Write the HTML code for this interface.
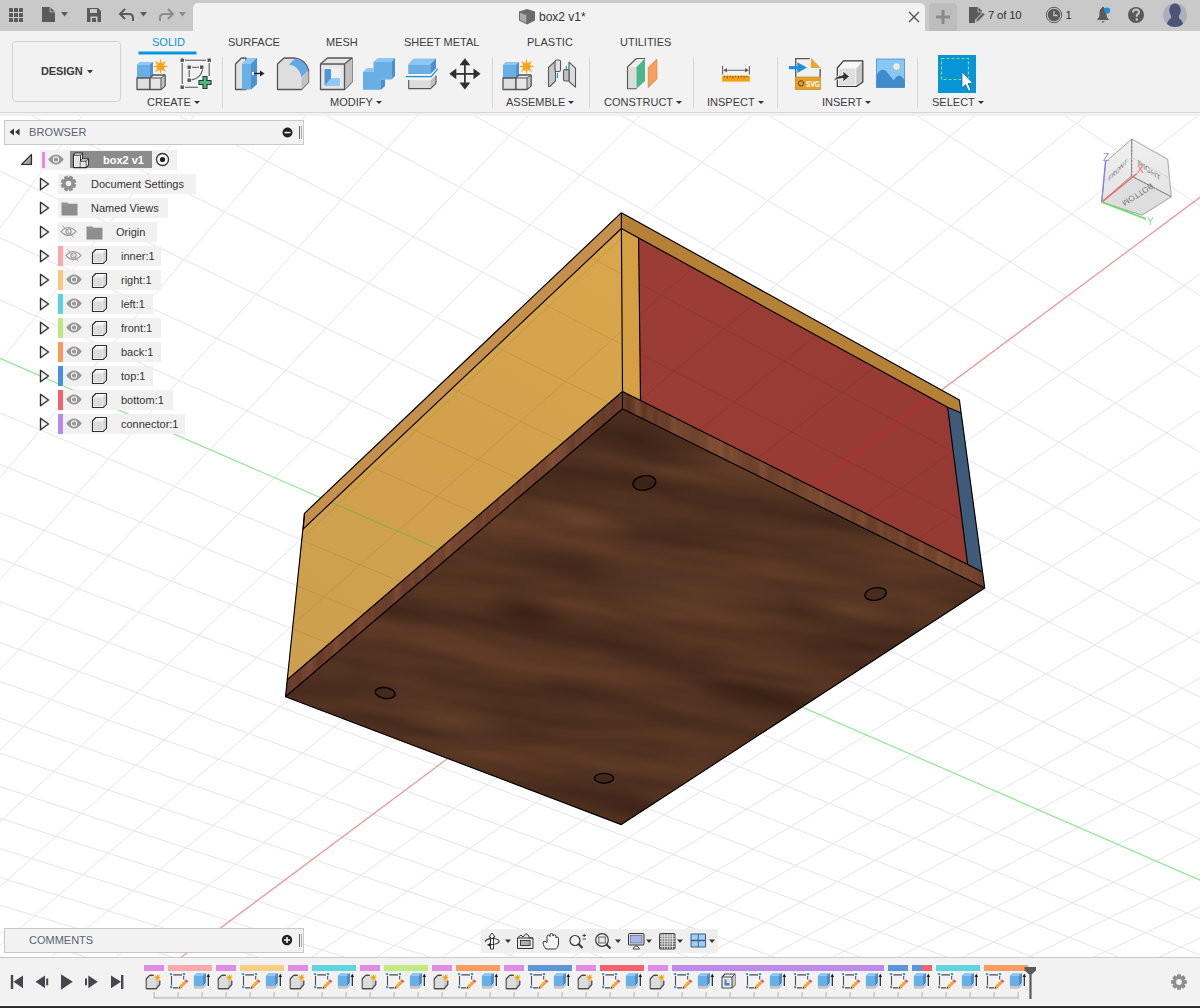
<!DOCTYPE html>
<html><head><meta charset="utf-8">
<style>
*{box-sizing:border-box;margin:0;padding:0}
html,body{width:1200px;height:1008px;overflow:hidden;background:#fff;font-family:"Liberation Sans",sans-serif;color:#3c3c3c}
.abs{position:absolute}
#topbar{position:absolute;left:0;top:0;width:1200px;height:31px;background:#c9c9c9}
#tab{position:absolute;left:193px;top:3px;width:732px;height:29px;background:#f2f2f2;border-radius:5px 5px 0 0}
#toolbar{position:absolute;left:0;top:31px;width:1200px;height:82px;background:#f2f2f2;border-bottom:1px solid #d6d6d6}
.tabt{position:absolute;top:35px;font-size:12px;color:#3c3c3c;white-space:nowrap;letter-spacing:0}
.lbl{position:absolute;top:95px;font-size:11.5px;color:#3c3c3c;white-space:nowrap}
.lbl i{display:inline-block;width:0;height:0;border-left:3px solid transparent;border-right:3px solid transparent;border-top:4px solid #3c3c3c;margin-left:3px;vertical-align:2px}
.sep{position:absolute;top:57px;width:1px;height:50px;background:#d4d4d4}
#viewport{position:absolute;left:0;top:113px;width:1200px;height:845px;overflow:hidden;background:#fff}
.panel{position:absolute;background:#f2f2f2;border:1px solid #c8c8c8}
.row{position:absolute;height:20px;background:rgba(240,240,240,0.95);font-size:12px;color:#3c3c3c;line-height:20px;white-space:nowrap}
.tri{position:absolute;width:11px;height:13px}
#timeline{position:absolute;left:0;top:957px;width:1200px;height:51px;background:#f2f2f2;border-top:1px solid #cacaca}
</style></head><body>
<div id="viewport">
<svg width="1200" height="845" viewBox="0 113 1200 845" style="position:absolute;left:0;top:0">
<path d="M-803.3 834.5L179.4 -1315.5M-740.2 851.3L310.6 -1199.9M-678.7 867.7L433.2 -1091.8M-618.7 883.7L548.2 -990.5M-560.2 899.3L656.2 -895.3M-503.1 914.5L757.8 -805.8M-447.4 929.3L853.6 -721.3M-393.1 943.8L944.1 -641.6M-340.0 958.0L1029.6 -566.2M-288.2 971.8L1110.7 -494.8M-237.5 985.3L1187.6 -427.0M-188.0 998.5L1260.6 -362.7M-139.7 1011.3L1330.0 -301.5M-92.4 1023.9L1396.2 -243.2M-46.1 1036.3L1459.2 -187.6M-0.9 1048.3L1519.4 -134.5M86.7 1071.7L1631.9 -35.4M129.1 1083.0L1684.6 11.0M170.6 1094.0L1735.0 55.5M211.3 1104.8L1783.4 98.1M251.1 1115.5L1829.9 139.1M290.1 1125.9L1874.5 178.4M328.3 1136.0L1917.4 216.2M365.8 1146.0L1958.7 252.6M402.5 1155.8L1998.5 287.6M438.6 1165.4L2036.8 321.4M473.9 1174.8L2073.7 354.0M508.5 1184.1L2109.3 385.4M542.5 1193.1L2143.8 415.7M575.9 1202.0L2177.0 445.0M608.6 1210.7L2209.1 473.3M640.8 1219.3L2240.2 500.7M672.3 1227.7L2270.3 527.2M703.3 1236.0L2299.4 552.9M733.7 1244.1L2327.6 577.7M-803.3 834.5L763.6 1252.0M-792.9 811.6L789.4 1241.5M-782.0 787.9L815.8 1230.7M-770.8 763.3L842.8 1219.7M-759.1 737.8L870.5 1208.4M-747.0 711.3L898.9 1196.8M-734.4 683.8L928.0 1184.9M-721.4 655.2L957.9 1172.7M-707.8 625.5L988.5 1160.1M-693.6 594.5L1019.9 1147.3M-678.9 562.3L1052.2 1134.1M-663.5 528.7L1085.4 1120.6M-647.5 493.6L1119.4 1106.6M-630.7 456.9L1154.5 1092.3M-613.2 418.6L1190.5 1077.6M-594.9 378.4L1227.5 1062.5M-575.6 336.4L1265.6 1046.9M-555.5 292.3L1304.8 1030.9M-534.3 245.9L1345.2 1014.4M-512.0 197.2L1386.8 997.4M-463.9 91.8L1474.0 961.8M-437.8 34.7L1519.6 943.1M-410.1 -25.7L1566.8 923.9M-380.9 -89.6L1615.5 904.0M-349.9 -157.5L1665.8 883.4M-316.9 -229.7L1717.8 862.2M-281.8 -306.5L1771.6 840.2M-244.3 -388.5L1827.3 817.4M-204.2 -476.2L1885.0 793.8M-161.3 -570.2L1944.8 769.4M-115.1 -671.2L2006.8 744.1M-65.3 -780.1L2071.2 717.8M-11.5 -897.7L2138.0 690.5M46.8 -1025.3L2207.5 662.1M110.2 -1164.0L2279.7 632.5" stroke="#e5e5e5" stroke-width="1" fill="none"/><path d="M-488.6 145.9L1429.7 979.9" stroke="#86e886" stroke-width="1.1" fill="none"/><path d="M43.4 1060.1L1576.9 -83.9" stroke="#f28a8a" stroke-width="1.1" fill="none"/>
<defs>
<linearGradient id="gyel" gradientUnits="userSpaceOnUse" x1="621" y1="230" x2="300" y2="680"><stop offset="0" stop-color="#d9a74c"/><stop offset="0.45" stop-color="#d2a14c"/><stop offset="1" stop-color="#cda04f"/></linearGradient>
<linearGradient id="gred" gradientUnits="userSpaceOnUse" x1="640" y1="240" x2="960" y2="560"><stop offset="0" stop-color="#9b3d35"/><stop offset="1" stop-color="#953a33"/></linearGradient>
<linearGradient id="gwood" gradientUnits="userSpaceOnUse" x1="-54.9" y1="274.7" x2="-135.2" y2="676.9"><stop offset="0.0" stop-color="#563323"/><stop offset="0.029" stop-color="#40261a"/><stop offset="0.059" stop-color="#593624"/><stop offset="0.088" stop-color="#3f2619"/><stop offset="0.118" stop-color="#583524"/><stop offset="0.147" stop-color="#42281b"/><stop offset="0.176" stop-color="#533222"/><stop offset="0.206" stop-color="#43281b"/><stop offset="0.235" stop-color="#533222"/><stop offset="0.265" stop-color="#43281b"/><stop offset="0.294" stop-color="#533222"/><stop offset="0.324" stop-color="#3f261a"/><stop offset="0.353" stop-color="#573423"/><stop offset="0.382" stop-color="#472b1d"/><stop offset="0.412" stop-color="#543222"/><stop offset="0.441" stop-color="#40271a"/><stop offset="0.471" stop-color="#593524"/><stop offset="0.5" stop-color="#482b1d"/><stop offset="0.529" stop-color="#583524"/><stop offset="0.559" stop-color="#42281b"/><stop offset="0.588" stop-color="#5d3826"/><stop offset="0.618" stop-color="#3e2519"/><stop offset="0.647" stop-color="#5c3725"/><stop offset="0.676" stop-color="#41271a"/><stop offset="0.706" stop-color="#543222"/><stop offset="0.735" stop-color="#3f261a"/><stop offset="0.765" stop-color="#563323"/><stop offset="0.794" stop-color="#472a1d"/><stop offset="0.824" stop-color="#543322"/><stop offset="0.853" stop-color="#44291c"/><stop offset="0.882" stop-color="#593624"/><stop offset="0.912" stop-color="#42281b"/><stop offset="0.941" stop-color="#583524"/><stop offset="0.971" stop-color="#3f2619"/><stop offset="1.0" stop-color="#533222"/></linearGradient>
<radialGradient id="rdark" cx="0.5" cy="0.5" r="0.5"><stop offset="0" stop-color="#2a170e" stop-opacity="0.55"/><stop offset="1" stop-color="#2a170e" stop-opacity="0"/></radialGradient>
<radialGradient id="rlight" cx="0.5" cy="0.5" r="0.5"><stop offset="0" stop-color="#7a5236" stop-opacity="0.45"/><stop offset="1" stop-color="#7a5236" stop-opacity="0"/></radialGradient>
<clipPath id="cbot"><polygon points="622.5,408.8 285.5,696.7 621.3,824.6 984.7,587.9"/></clipPath>
<linearGradient id="gstripL" gradientUnits="userSpaceOnUse" x1="290" y1="690" x2="620" y2="400"><stop offset="0" stop-color="#5e3526"/><stop offset="0.15" stop-color="#744430"/><stop offset="0.3" stop-color="#6a3d2b"/><stop offset="0.45" stop-color="#7a4a33"/><stop offset="0.6" stop-color="#6d3f2c"/><stop offset="0.8" stop-color="#7a4833"/><stop offset="1" stop-color="#5a3325"/></linearGradient>
<linearGradient id="gstripR" gradientUnits="userSpaceOnUse" x1="622" y1="400" x2="984" y2="580"><stop offset="0" stop-color="#5a3424"/><stop offset="0.12" stop-color="#6c412c"/><stop offset="0.25" stop-color="#7b4c33"/><stop offset="0.4" stop-color="#6a3f2b"/><stop offset="0.55" stop-color="#80513a"/><stop offset="0.7" stop-color="#6c412d"/><stop offset="0.85" stop-color="#7a4a34"/><stop offset="1" stop-color="#6a3e2b"/></linearGradient>
</defs>
<polygon points="621.4,212.7 304.5,513.3 285.5,696.7 621.3,824.6 984.7,587.9 959.4,400" fill="#5a3424"/>
<polygon points="621.4,212.7 304.5,513.3 303.3,528.8 621.4,228.5" fill="#c4904c"/>
<polygon points="621.4,228.5 303.3,528.8 287,680 622.5,391.5" fill="url(#gyel)"/>
<polygon points="621.4,212.7 959.4,400 960.7,412.8 947.6,407.3 621.4,228.5" fill="#b58136"/>
<polygon points="621.4,228.5 638.6,238.5 640.5,400.5 622.5,391.5" fill="#d4a043"/>
<polygon points="638.6,238.5 947.6,407.3 967.7,564.6 640.5,400.5" fill="url(#gred)"/>
<polygon points="947.6,407.3 960.7,412.8 982.5,572 967.7,563.4" fill="#3f5b7a"/>
<polygon points="622.5,391.5 287,680 285.5,696.7 622.5,408.8" fill="url(#gstripL)"/>
<polygon points="622.5,391.5 982.5,572 984.7,587.9 622.5,408.8" fill="url(#gstripR)"/>
<filter id="fstrip" x="0" y="0" width="1" height="1" color-interpolation-filters="sRGB"><feTurbulence type="fractalNoise" baseFrequency="0.12 0.008" numOctaves="2" seed="5"/><feColorMatrix type="matrix" values="0.3 0 0 0 0.3  0.2 0 0 0 0.165  0.14 0 0 0 0.105  0 0 0 0 0.55"/></filter>
<clipPath id="cstrips"><polygon points="622.5,391.5 287,680 285.5,696.7 622.5,408.8"/><polygon points="622.5,391.5 982.5,572 984.7,587.9 622.5,408.8"/></clipPath>
<g clip-path="url(#cstrips)"><rect x="280" y="385" width="710" height="320" filter="url(#fstrip)"/></g>
<filter id="fwood" x="0" y="0" width="1" height="1" color-interpolation-filters="sRGB"><feTurbulence type="fractalNoise" baseFrequency="0.005 0.032" numOctaves="3" seed="11"/><feColorMatrix type="matrix" values="0.19 0 0 0 0.222  0.125 0 0 0 0.13  0.08 0 0 0 0.088  0 0 0 0 1"/></filter>
<g clip-path="url(#cbot)"><rect x="200" y="250" width="900" height="700" filter="url(#fwood)" transform="rotate(9 620 600)"/></g>
<g clip-path="url(#cbot)">
<ellipse cx="526" cy="612" rx="45" ry="22" transform="rotate(12 526 612)" fill="url(#rdark)"/>
<ellipse cx="640" cy="440" rx="90" ry="25" transform="rotate(12 640 440)" fill="url(#rdark)"/>
<ellipse cx="770" cy="700" rx="80" ry="18" transform="rotate(12 770 700)" fill="url(#rdark)"/>
<ellipse cx="690" cy="590" rx="110" ry="35" transform="rotate(12 690 590)" fill="url(#rlight)"/>
<ellipse cx="455" cy="720" rx="70" ry="20" transform="rotate(12 455 720)" fill="url(#rlight)"/>
<ellipse cx="580" cy="520" rx="60" ry="16" transform="rotate(12 580 520)" fill="url(#rlight)"/>
<ellipse cx="850" cy="610" rx="60" ry="18" transform="rotate(12 850 610)" fill="url(#rlight)"/>
</g>
<clipPath id="cwall"><polygon points="621.4,228.5 303.3,528.8 287,680 622.5,391.5"/><polygon points="638.6,238.5 947.6,407.3 967.7,564.6 640.5,400.5"/></clipPath>
<path clip-path="url(#cwall)" d="M-803.3 834.5L179.4 -1315.5M-740.2 851.3L310.6 -1199.9M-678.7 867.7L433.2 -1091.8M-618.7 883.7L548.2 -990.5M-560.2 899.3L656.2 -895.3M-503.1 914.5L757.8 -805.8M-447.4 929.3L853.6 -721.3M-393.1 943.8L944.1 -641.6M-340.0 958.0L1029.6 -566.2M-288.2 971.8L1110.7 -494.8M-237.5 985.3L1187.6 -427.0M-188.0 998.5L1260.6 -362.7M-139.7 1011.3L1330.0 -301.5M-92.4 1023.9L1396.2 -243.2M-46.1 1036.3L1459.2 -187.6M-0.9 1048.3L1519.4 -134.5M43.4 1060.1L1576.9 -83.9M86.7 1071.7L1631.9 -35.4M129.1 1083.0L1684.6 11.0M170.6 1094.0L1735.0 55.5M211.3 1104.8L1783.4 98.1M251.1 1115.5L1829.9 139.1M290.1 1125.9L1874.5 178.4M328.3 1136.0L1917.4 216.2M365.8 1146.0L1958.7 252.6M402.5 1155.8L1998.5 287.6M438.6 1165.4L2036.8 321.4M473.9 1174.8L2073.7 354.0M508.5 1184.1L2109.3 385.4M542.5 1193.1L2143.8 415.7M575.9 1202.0L2177.0 445.0M608.6 1210.7L2209.1 473.3M640.8 1219.3L2240.2 500.7M672.3 1227.7L2270.3 527.2M703.3 1236.0L2299.4 552.9M733.7 1244.1L2327.6 577.7M-803.3 834.5L763.6 1252.0M-792.9 811.6L789.4 1241.5M-782.0 787.9L815.8 1230.7M-770.8 763.3L842.8 1219.7M-759.1 737.8L870.5 1208.4M-747.0 711.3L898.9 1196.8M-734.4 683.8L928.0 1184.9M-721.4 655.2L957.9 1172.7M-707.8 625.5L988.5 1160.1M-693.6 594.5L1019.9 1147.3M-678.9 562.3L1052.2 1134.1M-663.5 528.7L1085.4 1120.6M-647.5 493.6L1119.4 1106.6M-630.7 456.9L1154.5 1092.3M-613.2 418.6L1190.5 1077.6M-594.9 378.4L1227.5 1062.5M-575.6 336.4L1265.6 1046.9M-555.5 292.3L1304.8 1030.9M-534.3 245.9L1345.2 1014.4M-512.0 197.2L1386.8 997.4M-488.6 145.9L1429.7 979.9M-463.9 91.8L1474.0 961.8M-437.8 34.7L1519.6 943.1M-410.1 -25.7L1566.8 923.9M-380.9 -89.6L1615.5 904.0M-349.9 -157.5L1665.8 883.4M-316.9 -229.7L1717.8 862.2M-281.8 -306.5L1771.6 840.2M-244.3 -388.5L1827.3 817.4M-204.2 -476.2L1885.0 793.8M-161.3 -570.2L1944.8 769.4M-115.1 -671.2L2006.8 744.1M-65.3 -780.1L2071.2 717.8M-11.5 -897.7L2138.0 690.5M46.8 -1025.3L2207.5 662.1M110.2 -1164.0L2279.7 632.5" stroke="#000" stroke-opacity="0.075" stroke-width="1" fill="none"/>
<path clip-path="url(#cwall)" d="M-488.6 145.9L1429.7 979.9" stroke="#30e030" stroke-opacity="0.35" stroke-width="1.1" fill="none"/>
<path clip-path="url(#cwall)" d="M43.4 1060.1L1576.9 -83.9" stroke="#ff2020" stroke-opacity="0.45" stroke-width="1.1" fill="none"/>
<polyline points="621.4,212.7 304.5,513.3 285.5,696.7 621.3,824.6 984.7,587.9 959.4,400 621.4,212.7" fill="none" stroke="#000" stroke-width="1.15" stroke-linejoin="round"/>
<polyline points="304.5,513.3 303.3,528.8 621.4,228.5 947.6,407.3 960.7,412.8" fill="none" stroke="#000" stroke-width="1.15" stroke-linejoin="round"/>
<polyline points="621.4,212.7 621.4,228.5 622.5,391.5 622.5,408.8" fill="none" stroke="#000" stroke-width="1.15" stroke-linejoin="round"/>
<polyline points="638.6,238.5 640.5,400.5" fill="none" stroke="#000" stroke-width="1.15" stroke-linejoin="round"/>
<polyline points="287,680 622.5,391.5 982.5,572" fill="none" stroke="#000" stroke-width="1.15" stroke-linejoin="round"/>
<polyline points="285.5,696.7 622.5,408.8 984.7,587.9" fill="none" stroke="#000" stroke-width="1.15" stroke-linejoin="round"/>
<polyline points="947.6,407.3 967.7,564.6" fill="none" stroke="#000" stroke-width="1.15" stroke-linejoin="round"/>
<defs><radialGradient id="rhole" cx="0.5" cy="0.4" r="0.6"><stop offset="0" stop-color="#6a442e"/><stop offset="1" stop-color="#3a2118"/></radialGradient></defs>
<ellipse cx="644.4" cy="482.9" rx="11.5" ry="7.1" transform="rotate(-10 644.4 482.9)" fill="#2e1a10" fill-opacity="0.35" stroke="#000" stroke-width="1.35"/>
<ellipse cx="875.6" cy="594" rx="10.8" ry="6.2" transform="rotate(-10 875.6 594)" fill="#2e1a10" fill-opacity="0.35" stroke="#000" stroke-width="1.35"/>
<ellipse cx="385.2" cy="693" rx="10" ry="5.4" transform="rotate(8 385.2 693)" fill="#2e1a10" fill-opacity="0.35" stroke="#000" stroke-width="1.35"/>
<ellipse cx="604" cy="778.2" rx="9.5" ry="4.9" transform="rotate(0 604 778.2)" fill="#2e1a10" fill-opacity="0.35" stroke="#000" stroke-width="1.35"/>
</svg>
</div>
<div id="topbar"></div>
<div id="tab"></div>
<div id="toolbar"></div>
<div class="abs" style="left:0;top:113px;width:1200px;height:3px;background:#f1f1f1"></div>
<div class="abs" style="left:12px;top:41px;width:109px;height:61px;border:1px solid #d3d3d3;border-radius:4px;background:#f2f2f2"></div>
<div class="abs" style="left:41px;top:64px;font-size:11px;font-weight:bold;color:#3a3a3a;line-height:14px;letter-spacing:-0.1px">DESIGN</div>
<div class="abs" style="left:152px;top:35px;font-size:11px;color:#0696d7;line-height:14px">SOLID</div>
<div class="abs" style="left:228px;top:35px;font-size:11px;color:#3c3c3c;line-height:14px">SURFACE</div>
<div class="abs" style="left:326px;top:35px;font-size:11px;color:#3c3c3c;line-height:14px">MESH</div>
<div class="abs" style="left:404px;top:35px;font-size:11px;color:#3c3c3c;line-height:14px">SHEET METAL</div>
<div class="abs" style="left:527px;top:35px;font-size:11px;color:#3c3c3c;line-height:14px">PLASTIC</div>
<div class="abs" style="left:620px;top:35px;font-size:11px;color:#3c3c3c;line-height:14px">UTILITIES</div>
<div class="abs" style="left:147px;top:95px;font-size:11px;color:#3c3c3c;line-height:14px">CREATE<span style="display:inline-block;width:0;height:0;border-left:3px solid transparent;border-right:3px solid transparent;border-top:3.5px solid #333;margin-left:3px;vertical-align:2px"></span></div>
<div class="abs" style="left:330px;top:95px;font-size:11px;color:#3c3c3c;line-height:14px">MODIFY<span style="display:inline-block;width:0;height:0;border-left:3px solid transparent;border-right:3px solid transparent;border-top:3.5px solid #333;margin-left:3px;vertical-align:2px"></span></div>
<div class="abs" style="left:506px;top:95px;font-size:11px;color:#3c3c3c;line-height:14px">ASSEMBLE<span style="display:inline-block;width:0;height:0;border-left:3px solid transparent;border-right:3px solid transparent;border-top:3.5px solid #333;margin-left:3px;vertical-align:2px"></span></div>
<div class="abs" style="left:604px;top:95px;font-size:11px;color:#3c3c3c;line-height:14px">CONSTRUCT<span style="display:inline-block;width:0;height:0;border-left:3px solid transparent;border-right:3px solid transparent;border-top:3.5px solid #333;margin-left:3px;vertical-align:2px"></span></div>
<div class="abs" style="left:707px;top:95px;font-size:11px;color:#3c3c3c;line-height:14px">INSPECT<span style="display:inline-block;width:0;height:0;border-left:3px solid transparent;border-right:3px solid transparent;border-top:3.5px solid #333;margin-left:3px;vertical-align:2px"></span></div>
<div class="abs" style="left:822px;top:95px;font-size:11px;color:#3c3c3c;line-height:14px">INSERT<span style="display:inline-block;width:0;height:0;border-left:3px solid transparent;border-right:3px solid transparent;border-top:3.5px solid #333;margin-left:3px;vertical-align:2px"></span></div>
<div class="abs" style="left:932px;top:95px;font-size:11px;color:#3c3c3c;line-height:14px">SELECT<span style="display:inline-block;width:0;height:0;border-left:3px solid transparent;border-right:3px solid transparent;border-top:3.5px solid #333;margin-left:3px;vertical-align:2px"></span></div>
<svg class="abs" style="left:0;top:0" width="1200" height="113" viewBox="0 0 1200 113"><g fill="#5a5a5a"><rect x="9" y="8" width="4" height="4" rx="0.6"/><rect x="14" y="8" width="4" height="4" rx="0.6"/><rect x="19" y="8" width="4" height="4" rx="0.6"/><rect x="9" y="13" width="4" height="4" rx="0.6"/><rect x="14" y="13" width="4" height="4" rx="0.6"/><rect x="19" y="13" width="4" height="4" rx="0.6"/><rect x="9" y="18" width="4" height="4" rx="0.6"/><rect x="14" y="18" width="4" height="4" rx="0.6"/><rect x="19" y="18" width="4" height="4" rx="0.6"/></g><path d="M42 7 H50 L55 12 V22 H42Z" fill="#5a5a5a"/><path d="M50 7 V12 H55" fill="#c9c9c9" stroke="#c9c9c9" stroke-width="0.6"/><path d="M50.5 7.5 L54.5 11.5 H50.5Z" fill="#5a5a5a"/><path d="M61 12 H68 L64.5 16.5Z" fill="#5a5a5a"/><path d="M87 8 H98 L101 11 V22 H87Z" fill="#5a5a5a"/><rect x="90" y="9" width="7" height="4" fill="#c9c9c9"/><path d="M90.5 22 V16.5 H97.5 V22 H96 V18 H92 V22Z" fill="#c9c9c9"/><path d="M121 14 H129 Q133 14 133 18 V21" fill="none" stroke="#5a5a5a" stroke-width="2"/><path d="M125 9 L120 14 L125 19" fill="none" stroke="#5a5a5a" stroke-width="2"/><path d="M140 12 H147 L143.5 16.5Z" fill="#5a5a5a"/><path d="M172 14 H164 Q160 14 160 18 V21" fill="none" stroke="#8c8c8c" stroke-width="2"/><path d="M168 9 L173 14 L168 19" fill="none" stroke="#8c8c8c" stroke-width="2"/><path d="M179 12 H186 L182.5 16.5Z" fill="#8c8c8c"/><path d="M519 11.5 L527 9 L535 11.5 L535 20.5 L527 24.5 L519 20.5Z" fill="#6a6a6a"/><path d="M520 12.8 L526.3 15 V23 L520 20Z" fill="#ababab"/><path d="M909 12 L919 22 M919 12 L909 22" stroke="#555" stroke-width="1.4"/><path d="M929 31 V7 Q929 3 933 3 H953 Q957 3 957 7 V31Z" fill="#bdbdbd"/><path d="M943 10 V24 M936 17 H950" stroke="#8a8a8a" stroke-width="3"/><path d="M969 7 H978 L982 11 V13 L975 20 V23 H969Z" fill="#5a5a5a"/><path d="M978 7 V12 H983" fill="none" stroke="#c9c9c9" stroke-width="0.8"/><path d="M975.5 22.5 L976.5 19 L983 12.5 L985 14.5 L978.5 21Z" fill="#5a5a5a" stroke="#c9c9c9" stroke-width="0.9"/><circle cx="1054" cy="15" r="7.7" fill="none" stroke="#5a5a5a" stroke-width="1"/><circle cx="1054" cy="15" r="6.2" fill="#5a5a5a"/><path d="M1054 11 V15.5 H1057.5" fill="none" stroke="#c9c9c9" stroke-width="1.3"/><path d="M1096.5 20 Q1099.5 18 1099.5 14 V12.5 Q1099.5 8.5 1102 8 V7 H1104 V8 Q1106.5 8.5 1106.5 12.5 V14 Q1106.5 18 1109.5 20Z" fill="#5a5a5a"/><path d="M1101 21.2 H1105 L1103 22.8Z" fill="#5a5a5a"/><circle cx="1107.2" cy="10.5" r="3" fill="#1e90e0"/><circle cx="1136" cy="15" r="8" fill="#5a5a5a"/><path d="M1133 12.5 Q1133 9.5 1136 9.5 Q1139 9.5 1139 12.3 Q1139 14 1136.8 15 V16.8" fill="none" stroke="#c9c9c9" stroke-width="2"/><circle cx="1136.8" cy="19.5" r="1.2" fill="#c9c9c9"/><circle cx="1175" cy="15" r="12" fill="#aeaebe"/><clipPath id="avc"><circle cx="1175" cy="15" r="12"/></clipPath><g clip-path="url(#avc)" fill="#4e5478"><ellipse cx="1175" cy="10.5" rx="5.8" ry="7"/><rect x="1171" y="15" width="8" height="5"/><path d="M1166 28 Q1167 20 1171.5 18 H1178.5 Q1183 20 1184 28Z"/></g><path d="M87 70 H93 L90 73.5Z" fill="#3a3a3a"/><rect x="138.5" y="51.5" width="58" height="3" fill="#0696d7"/><rect x="222" y="57" width="1" height="51" fill="#d6d6d6"/><rect x="492" y="57" width="1" height="51" fill="#d6d6d6"/><rect x="589" y="57" width="1" height="51" fill="#d6d6d6"/><rect x="693" y="57" width="1" height="51" fill="#d6d6d6"/><rect x="777" y="57" width="1" height="51" fill="#d6d6d6"/><rect x="917" y="57" width="1" height="51" fill="#d6d6d6"/><path d="M137 65 L140 62 H153 V75 L150 78 H137Z" fill="#6aaee6"/><path d="M137 65 L140 62 H153 L150 65Z" fill="#8fc6f2"/><path d="M150 65 L153 62 V75 L150 78Z" fill="#4c93d2"/><path d="M137 78 H150 V89.5 H137Z" fill="#dedede" stroke="#555" stroke-width="1.3" stroke-linejoin="round"/><path d="M150 78 L153 75 H165 V86 L161 89.5 H150Z" fill="#e6e6e6" stroke="#555" stroke-width="1.3" stroke-linejoin="round"/><path d="M161 89.5 V78 L165 75 V86Z" fill="#c4c4c4" stroke="#555" stroke-width="1"/><path d="M150 78 H161" stroke="#555" stroke-width="1"/><polygon points="160.50,58.50 161.76,63.45 166.16,60.84 163.55,65.24 168.50,66.50 163.55,67.76 166.16,72.16 161.76,69.55 160.50,74.50 159.24,69.55 154.84,72.16 157.45,67.76 152.50,66.50 157.45,65.24 154.84,60.84 159.24,63.45" fill="#f5a511"/><path d="M503 65 L506 62 H519 V75 L516 78 H503Z" fill="#6aaee6"/><path d="M503 65 L506 62 H519 L516 65Z" fill="#8fc6f2"/><path d="M516 65 L519 62 V75 L516 78Z" fill="#4c93d2"/><path d="M503 78 H516 V89.5 H503Z" fill="#dedede" stroke="#555" stroke-width="1.3" stroke-linejoin="round"/><path d="M516 78 L519 75 H531 V86 L527 89.5 H516Z" fill="#e6e6e6" stroke="#555" stroke-width="1.3" stroke-linejoin="round"/><path d="M527 89.5 V78 L531 75 V86Z" fill="#c4c4c4" stroke="#555" stroke-width="1"/><path d="M516 78 H527" stroke="#555" stroke-width="1"/><polygon points="526.50,58.50 527.76,63.45 532.16,60.84 529.55,65.24 534.50,66.50 529.55,67.76 532.16,72.16 527.76,69.55 526.50,74.50 525.24,69.55 520.84,72.16 523.45,67.76 518.50,66.50 523.45,65.24 520.84,60.84 525.24,63.45" fill="#f5a511"/><g fill="#555"><rect x="180.5" y="58.5" width="3.4" height="3.4"/><rect x="207.5" y="58.5" width="3.4" height="3.4"/><rect x="180.5" y="85.5" width="3.4" height="3.4"/><rect x="187.5" y="65.5" width="3.4" height="3.4"/><rect x="200" y="65.5" width="3.4" height="3.4"/><rect x="187.5" y="78.5" width="3.4" height="3.4"/></g><path d="M185 60.2 H206 M182.2 63 V84 M185 87.2 H198 M209.2 63 V76 M192 67.2 H199 M189.2 70 V77" stroke="#555" stroke-width="1.1"/><path d="M191.5 80 Q201 78 202.5 69.5" fill="none" stroke="#555" stroke-width="1.1"/><path d="M203 76.5 H207 V80.5 H211 V84.5 H207 V88.5 H203 V84.5 H199 V80.5 H203Z" fill="#4fb97c" stroke="#1f3d2c" stroke-width="1.1" stroke-linejoin="miter"/><path d="M235.5 64 L241.5 58 H246 V89.5 H235.5Z" fill="#e2e2e2" stroke="#555" stroke-width="1.3" stroke-linejoin="round"/><path d="M242 64 L248 58 H257 V84 L251 89.6 H242Z" fill="#6aaee6"/><path d="M242 64 L248 58 H257 L251 64Z" fill="#8fc6f2"/><path d="M251 64 L257 58 V84 L251 89.6Z" fill="#4c93d2"/><path d="M254 73.5 H261" stroke="#222" stroke-width="1.4"/><path d="M260 70.5 L264.5 73.5 L260 76.5Z" fill="#222"/><rect x="252" y="72" width="2" height="3" fill="#f2f2f2"/><path d="M277.5 64 L284 58 H294 Q305 59 308.5 70 V82 L301.5 89.5 H277.5Z" fill="#dedede" stroke="#555" stroke-width="1.3" stroke-linejoin="round"/><path d="M301.5 89.5 V78 L308.5 71 V82Z" fill="#c2c2c2"/><path d="M289 64.5 L295 58.5 Q305.5 60 308 71 L301.5 77 Q299 66 289 64.5Z" fill="#64a8e2"/><path d="M320.5 64 L327.5 58 H352 V82 L344.5 89.5 H320.5Z" fill="#e6e6e6" stroke="#555" stroke-width="1.3" stroke-linejoin="round"/><path d="M344.5 64 L352 58 V82 L344.5 89.5Z" fill="#c2c2c2"/><path d="M320.5 64 H344.5 L352 58 M344.5 64 V89.5" fill="none" stroke="#555" stroke-width="1.3" stroke-linejoin="round"/><rect x="324" y="68" width="17" height="18" fill="#f0f0f0"/><path d="M324.5 69 H331 V78 H340 V85.5 H324.5Z" fill="#4e96d4"/><path d="M324.5 85.5 L331 78 H340 V85.5Z" fill="#8fc8f4"/><path d="M373.5 62 H391.4 V79.5 H381 V89.75 H363 V72 H373.5Z" fill="#6aaee6"/><path d="M373.5 62 L378 58 H395 L391.4 62Z M363 72 L367 68 H373.5 V72Z" fill="#8cc6f2"/><path d="M391.4 62 L395 58 V76 L391.4 79.5Z M381 79.5 H385 V86 L381 89.75Z" fill="#4a8fd0"/><path d="M408.2 64.3 H430.4 V74 H408.2Z" fill="#6aaee6"/><path d="M408.2 64.3 L413.5 58.5 H436 L430.4 64.3Z" fill="#8cc6f2"/><path d="M430.4 64.3 L436 58.5 V68.5 L430.4 74Z" fill="#4a8fd0"/><path d="M405.8 76.6 H431.2 L437.8 68.8" fill="none" stroke="#1e8fe0" stroke-width="1.3"/><path d="M408.7 80 V88.6 H430.6 L436 83.3 V75.5 L430.6 80.5Z" fill="#dcdcdc"/><path d="M430.6 80.5 L436 75.5 V83.3 L430.6 88.6Z" fill="#c0c0c0"/><path d="M408.7 80 V88.6 H430.6 L436 83.3 V75.5" fill="none" stroke="#555" stroke-width="1.1" stroke-linejoin="round"/><path d="M464.9 62 V86 M452 73.8 H478" stroke="#2e2e2e" stroke-width="1.7"/><path d="M464.9 58.2 L470.3 65.2 H459.5Z M464.9 89.4 L470.3 82.4 H459.5Z M449.3 73.8 L456.3 68.4 V79.2Z M480.5 73.8 L473.5 68.4 V79.2Z" fill="#2e2e2e"/><path d="M548.5 67.5 L555.5 60.8 V80.8 L549.8 86.5 H548.5Z" fill="#c8c8c8" stroke="#555" stroke-width="1.1" stroke-linejoin="round"/><rect x="555" y="60" width="5.5" height="11.5" rx="1.6" fill="#e2e2e2" stroke="#555" stroke-width="1.1"/><path d="M557.5 73 V78" stroke="#1e8fe0" stroke-width="1.1"/><path d="M569 62.2 L575.5 68.2 V87.2 L569 81.5Z" fill="#dcdcdc" stroke="#555" stroke-width="1.1" stroke-linejoin="round"/><rect x="563.5" y="69.5" width="5.5" height="11.5" rx="1.6" fill="#c0c0c0" stroke="#555" stroke-width="1.1"/><path d="M566.3 66 V71" stroke="#1e8fe0" stroke-width="1.1"/><path d="M627.5 67 L636.5 58.5 H645 L636.5 67Z" fill="#f0f0f0"/><rect x="627.5" y="67" width="9" height="21.7" fill="#dcdcdc"/><path d="M636.5 67 L645 58.5 V81 L636.5 88.7Z" fill="#4db58a"/><path d="M636.5 88.7 H627.5 V67 L636.5 58.5 H645" fill="none" stroke="#555" stroke-width="1.1" stroke-linejoin="round"/><path d="M648.3 67.5 L656.8 59 V79 L648.3 87.5Z" fill="#f7a05e" stroke="#d8924a" stroke-width="1"/><rect x="722.2" y="75.7" width="27.6" height="5.9" fill="#f4a20e"/><path d="M724.5 75.7 V77.5 M727.3 75.7 V78.3 M730.1 75.7 V77.5 M732.9 75.7 V78.3 M735.7 75.7 V77.5 M738.5 75.7 V78.3 M741.3 75.7 V77.5 M744.1 75.7 V78.3 M746.9 75.7 V77.5" stroke="#5a4a2a" stroke-width="0.8"/><path d="M722.6 66 V74.5 M749.4 66 V74.5 M724 70.3 H748" stroke="#666" stroke-width="1.1"/><path d="M723 70.3 L727 68 V72.6Z M749 70.3 L745 68 V72.6Z" fill="#666"/><path d="M795.8 77 V58.6 H809.5 M820 69 V77" fill="none" stroke="#555" stroke-width="1.1"/><rect x="796.3" y="59.1" width="23.2" height="18" fill="#f0f0f0"/><path d="M809.5 59.1 L820 69 V77 H796.3 V59.1Z" fill="#f0f0f0"/><path d="M811 58 L820.8 68 H811Z" fill="#eba630"/><path d="M795.8 77 V58.6 H809.5 M820 69 V77" fill="none" stroke="#555" stroke-width="1.1"/><rect x="795.3" y="77" width="25.2" height="12.7" fill="#e6a02a" stroke="#c08420" stroke-width="0.6"/><text x="806" y="87.3" font-family="Liberation Sans" font-weight="bold" font-size="8.5" textLength="14" lengthAdjust="spacingAndGlyphs" fill="#fff">SVG</text><circle cx="801" cy="83.3" r="2.6" fill="none" stroke="#3a2610" stroke-width="1.1" stroke-dasharray="1.2 0.6"/><path d="M789 66 H797.3 V62.2 L807 67.6 L797.3 73 V69.2 H789Z" fill="#1e90e0"/><path d="M837.3 68 L843.5 60.8 H862.8 V82 L856.3 86.5 H837.3Z" fill="#f8f8f8" stroke="#333" stroke-width="1.2" stroke-linejoin="round"/><rect x="839" y="68.5" width="16.5" height="17" fill="#dedede"/><path d="M856.3 68.5 L862 62 V81.5 L856.3 85.8Z" fill="#c6c6cc"/><path d="M833 81.5 Q835.5 75.5 843 75 V71 L849.5 76.5 L843 82 V78.5 Q837 78.5 833 81.5Z" fill="#333" stroke="#f4f4f4" stroke-width="0.9" stroke-linejoin="round"/><rect x="876.5" y="59" width="28" height="28.5" fill="#88c6f4" stroke="#4a8ecc" stroke-width="0.8"/><path d="M876.5 87.5 V75 Q882 66.5 887 72 Q891 77 893.5 80.5 Q897 74.5 900.5 76 Q903 77.5 904.5 80 V87.5Z" fill="#3f8bcb"/><circle cx="896.6" cy="66.5" r="3.2" fill="#f2f0cc"/><rect x="938" y="55" width="38" height="38" fill="#0696d7"/><rect x="941.5" y="58.5" width="27" height="21" fill="none" stroke="#7de07a" stroke-width="1.2" stroke-dasharray="3 2"/><path d="M962 72 L962 88 L965.5 84.5 L968.5 91 L971 90 L968 83.5 L973 83.5Z" fill="#fff" stroke="#0f5f8a" stroke-width="0.7"/></svg>
<div class="abs" style="left:539px;top:10px;font-size:12px;color:#333;line-height:15px">box2 v1*</div>
<div class="abs" style="left:988px;top:8px;font-size:11.3px;color:#303030;line-height:15px;letter-spacing:-0.15px">7 of 10</div>
<div class="abs" style="left:1065.5px;top:8px;font-size:11.3px;color:#303030;line-height:15px">1</div>
<div class="panel" style="left:4px;top:120px;width:300px;height:25px"></div>
<svg class="abs" style="left:9px;top:128px" width="11" height="8" viewBox="0 0 11 8"><path d="M5 0.5 L0.5 4 L5 7.5Z M10.5 0.5 L6 4 L10.5 7.5Z" fill="#333"/></svg>
<div class="abs" style="left:29px;top:126px;font-size:11px;color:#586470;letter-spacing:0.1px">BROWSER</div>
<svg class="abs" style="left:282px;top:127px" width="11" height="11" viewBox="0 0 11 11"><circle cx="5.5" cy="5.5" r="5" fill="#222"/><rect x="2.5" y="4.8" width="6" height="1.5" fill="#fff"/></svg>
<div class="abs" style="left:299px;top:126px;width:1px;height:13px;background:#666"></div><div class="abs" style="left:301px;top:126px;width:1px;height:13px;background:#aaa"></div>
<div class="row" style="left:40px;top:150px;width:137px"></div>
<svg class="abs" style="left:20px;top:153px" width="13" height="13" viewBox="0 0 13 13"><defs><linearGradient id="tg" x1="0" y1="0" x2="1" y2="1"><stop offset="0" stop-color="#fff"/><stop offset="1" stop-color="#777"/></linearGradient></defs><path d="M11.5 1.5 L11.5 11.5 L1.5 11.5Z" fill="url(#tg)" stroke="#2a2a2a" stroke-width="1.2" stroke-linejoin="round"/></svg>
<div class="abs" style="left:42px;top:152px;width:3px;height:16px;background:#e08ce4"></div>
<svg class="abs" style="left:48px;top:154px" width="16" height="11" viewBox="0 0 16 11"><path d="M0.2 5.5 Q8 -4.6 15.8 5.5 Q8 15.6 0.2 5.5Z" fill="#979797"/><circle cx="8" cy="5.5" r="3.2" fill="#efefef"/><circle cx="8" cy="5.5" r="2.1" fill="#979797"/></svg>
<div class="abs" style="left:70px;top:151px;width:82px;height:17px;background:#8c8c8c"></div>
<svg class="abs" style="left:72px;top:152px" width="18" height="17" viewBox="0 0 18 17"><path d="M1.5 3.2 L3.2 1 H10.5 V6.8 H16.4 V13.2 L14.2 15.6 H1.5Z" fill="#fff" stroke="#2e2e2e" stroke-width="1.1" stroke-linejoin="round"/><path d="M8 15.6 V9.2 L10.5 6.8 M8 9.2 H14 L16.4 6.8 M14 9.2 V15.6 M1.5 3.2 H8.5 L10.5 1 M8.5 3.2 V9" fill="none" stroke="#2e2e2e" stroke-width="1"/><rect x="2.6" y="4.2" width="5" height="10.5" fill="#e4e4e8"/><rect x="9" y="10.2" width="4.5" height="4.5" fill="#e4e4e8"/></svg>
<div class="abs" style="left:103px;top:152px;font-size:11px;font-weight:bold;color:#fff;line-height:16px">box2 v1</div>
<svg class="abs" style="left:155px;top:152px" width="15" height="15" viewBox="0 0 15 15"><circle cx="7.5" cy="7.5" r="6" fill="#fff" stroke="#333" stroke-width="1.3"/><circle cx="7.5" cy="7.5" r="2.6" fill="#222"/></svg>
<svg class="abs" style="left:39px;top:177px" width="11" height="14" viewBox="0 0 11 14"><path d="M1.5 1.2 L9.5 7 L1.5 12.8Z" fill="#f4f4f4" stroke="#2f2f2f" stroke-width="1.4" stroke-linejoin="round"/></svg>
<div class="row" style="left:58px;top:174px;width:138px"></div>
<svg class="abs" style="left:60px;top:175px" width="17" height="17" viewBox="0 0 17 17"><path fill="#8e8e8e" fill-rule="evenodd" d="M14.50,8.70 L16.38,9.87 L15.04,13.10 L12.88,12.60 L12.60,12.88 L13.10,15.04 L9.87,16.38 L8.70,14.50 L8.30,14.50 L7.13,16.38 L3.90,15.04 L4.40,12.88 L4.12,12.60 L1.96,13.10 L0.62,9.87 L2.50,8.70 L2.50,8.30 L0.62,7.13 L1.96,3.90 L4.12,4.40 L4.40,4.12 L3.90,1.96 L7.13,0.62 L8.30,2.50 L8.70,2.50 L9.87,0.62 L13.10,1.96 L12.60,4.12 L12.88,4.40 L15.04,3.90 L16.38,7.13 L14.50,8.30Z M11.3 8.5 A2.8 2.8 0 1 0 5.7 8.5 A2.8 2.8 0 1 0 11.3 8.5Z"/></svg>
<div class="abs" style="left:91px;top:174px;font-size:11px;line-height:20px;color:#333">Document Settings</div>
<svg class="abs" style="left:39px;top:201px" width="11" height="14" viewBox="0 0 11 14"><path d="M1.5 1.2 L9.5 7 L1.5 12.8Z" fill="#f4f4f4" stroke="#2f2f2f" stroke-width="1.4" stroke-linejoin="round"/></svg>
<div class="row" style="left:58px;top:198px;width:110px"></div>
<svg class="abs" style="left:61px;top:202px" width="17" height="14" viewBox="0 0 17 14"><path d="M0.5 0.5 H6.5 L7.5 1.8 H16.5 V13.5 H0.5Z" fill="#8e8e8e"/><path d="M0.5 2.2 H7" stroke="#b0b0b0" stroke-width="0.5"/></svg>
<div class="abs" style="left:91px;top:198px;font-size:11px;line-height:20px;color:#333">Named Views</div>
<svg class="abs" style="left:39px;top:225px" width="11" height="14" viewBox="0 0 11 14"><path d="M1.5 1.2 L9.5 7 L1.5 12.8Z" fill="#f4f4f4" stroke="#2f2f2f" stroke-width="1.4" stroke-linejoin="round"/></svg>
<div class="row" style="left:58px;top:222px;width:99px"></div>
<svg class="abs" style="left:60px;top:225px" width="17" height="13" viewBox="0 0 17 13"><path d="M1 6.5 Q8.5 -1.5 16 6.5 Q8.5 14.5 1 6.5Z" fill="none" stroke="#a0a0a0" stroke-width="1.2"/><circle cx="8.5" cy="6.5" r="2.6" fill="none" stroke="#a0a0a0" stroke-width="1.2"/><path d="M2.5 0.5 L13.5 12.5" stroke="#a0a0a0" stroke-width="1"/></svg>
<svg class="abs" style="left:86px;top:226px" width="17" height="14" viewBox="0 0 17 14"><path d="M0.5 0.5 H6.5 L7.5 1.8 H16.5 V13.5 H0.5Z" fill="#8e8e8e"/><path d="M0.5 2.2 H7" stroke="#b0b0b0" stroke-width="0.5"/></svg>
<div class="abs" style="left:116px;top:222px;font-size:11px;line-height:20px;color:#333">Origin</div>
<svg class="abs" style="left:39px;top:249px" width="11" height="14" viewBox="0 0 11 14"><path d="M1.5 1.2 L9.5 7 L1.5 12.8Z" fill="#f4f4f4" stroke="#2f2f2f" stroke-width="1.4" stroke-linejoin="round"/></svg>
<div class="row" style="left:58px;top:246px;width:103px"></div>
<div class="abs" style="left:58px;top:246px;width:5px;height:20px;background:#f9a9a9"></div>
<svg class="abs" style="left:65px;top:249px" width="17" height="13" viewBox="0 0 17 13"><path d="M1 6.5 Q8.5 -1.5 16 6.5 Q8.5 14.5 1 6.5Z" fill="none" stroke="#a0a0a0" stroke-width="1.2"/><circle cx="8.5" cy="6.5" r="2.6" fill="none" stroke="#a0a0a0" stroke-width="1.2"/><path d="M2.5 0.5 L13.5 12.5" stroke="#a0a0a0" stroke-width="1"/></svg>
<svg class="abs" style="left:91px;top:248px" width="17" height="17" viewBox="0 0 17 17"><path d="M1.5 5 L4.8 1.5 H15.5 V12.2 L12.2 15.5 H1.5Z" fill="#f4f4f4" stroke="#333" stroke-width="1.2" stroke-linejoin="round"/><rect x="3" y="5.5" width="8.5" height="8.8" fill="#dcdcdc"/><path d="M12.2 5 L15 2.2 V12 L12.2 14.8Z" fill="#d2d2d2"/></svg>
<div class="abs" style="left:121px;top:246px;font-size:11px;line-height:20px;color:#333">inner:1</div>
<svg class="abs" style="left:39px;top:273px" width="11" height="14" viewBox="0 0 11 14"><path d="M1.5 1.2 L9.5 7 L1.5 12.8Z" fill="#f4f4f4" stroke="#2f2f2f" stroke-width="1.4" stroke-linejoin="round"/></svg>
<div class="row" style="left:58px;top:270px;width:103px"></div>
<div class="abs" style="left:58px;top:270px;width:5px;height:20px;background:#f7c97c"></div>
<svg class="abs" style="left:66px;top:274px" width="16" height="11" viewBox="0 0 16 11"><path d="M0.2 5.5 Q8 -4.6 15.8 5.5 Q8 15.6 0.2 5.5Z" fill="#979797"/><circle cx="8" cy="5.5" r="3.2" fill="#efefef"/><circle cx="8" cy="5.5" r="2.1" fill="#979797"/></svg>
<svg class="abs" style="left:91px;top:272px" width="17" height="17" viewBox="0 0 17 17"><path d="M1.5 5 L4.8 1.5 H15.5 V12.2 L12.2 15.5 H1.5Z" fill="#f4f4f4" stroke="#333" stroke-width="1.2" stroke-linejoin="round"/><rect x="3" y="5.5" width="8.5" height="8.8" fill="#dcdcdc"/><path d="M12.2 5 L15 2.2 V12 L12.2 14.8Z" fill="#d2d2d2"/></svg>
<div class="abs" style="left:121px;top:270px;font-size:11px;line-height:20px;color:#333">right:1</div>
<svg class="abs" style="left:39px;top:297px" width="11" height="14" viewBox="0 0 11 14"><path d="M1.5 1.2 L9.5 7 L1.5 12.8Z" fill="#f4f4f4" stroke="#2f2f2f" stroke-width="1.4" stroke-linejoin="round"/></svg>
<div class="row" style="left:58px;top:294px;width:95px"></div>
<div class="abs" style="left:58px;top:294px;width:5px;height:20px;background:#5ad2de"></div>
<svg class="abs" style="left:66px;top:298px" width="16" height="11" viewBox="0 0 16 11"><path d="M0.2 5.5 Q8 -4.6 15.8 5.5 Q8 15.6 0.2 5.5Z" fill="#979797"/><circle cx="8" cy="5.5" r="3.2" fill="#efefef"/><circle cx="8" cy="5.5" r="2.1" fill="#979797"/></svg>
<svg class="abs" style="left:91px;top:296px" width="17" height="17" viewBox="0 0 17 17"><path d="M1.5 5 L4.8 1.5 H15.5 V12.2 L12.2 15.5 H1.5Z" fill="#f4f4f4" stroke="#333" stroke-width="1.2" stroke-linejoin="round"/><rect x="3" y="5.5" width="8.5" height="8.8" fill="#dcdcdc"/><path d="M12.2 5 L15 2.2 V12 L12.2 14.8Z" fill="#d2d2d2"/></svg>
<div class="abs" style="left:121px;top:294px;font-size:11px;line-height:20px;color:#333">left:1</div>
<svg class="abs" style="left:39px;top:321px" width="11" height="14" viewBox="0 0 11 14"><path d="M1.5 1.2 L9.5 7 L1.5 12.8Z" fill="#f4f4f4" stroke="#2f2f2f" stroke-width="1.4" stroke-linejoin="round"/></svg>
<div class="row" style="left:58px;top:318px;width:103px"></div>
<div class="abs" style="left:58px;top:318px;width:5px;height:20px;background:#bfe97f"></div>
<svg class="abs" style="left:66px;top:322px" width="16" height="11" viewBox="0 0 16 11"><path d="M0.2 5.5 Q8 -4.6 15.8 5.5 Q8 15.6 0.2 5.5Z" fill="#979797"/><circle cx="8" cy="5.5" r="3.2" fill="#efefef"/><circle cx="8" cy="5.5" r="2.1" fill="#979797"/></svg>
<svg class="abs" style="left:91px;top:320px" width="17" height="17" viewBox="0 0 17 17"><path d="M1.5 5 L4.8 1.5 H15.5 V12.2 L12.2 15.5 H1.5Z" fill="#f4f4f4" stroke="#333" stroke-width="1.2" stroke-linejoin="round"/><rect x="3" y="5.5" width="8.5" height="8.8" fill="#dcdcdc"/><path d="M12.2 5 L15 2.2 V12 L12.2 14.8Z" fill="#d2d2d2"/></svg>
<div class="abs" style="left:121px;top:318px;font-size:11px;line-height:20px;color:#333">front:1</div>
<svg class="abs" style="left:39px;top:345px" width="11" height="14" viewBox="0 0 11 14"><path d="M1.5 1.2 L9.5 7 L1.5 12.8Z" fill="#f4f4f4" stroke="#2f2f2f" stroke-width="1.4" stroke-linejoin="round"/></svg>
<div class="row" style="left:58px;top:342px;width:103px"></div>
<div class="abs" style="left:58px;top:342px;width:5px;height:20px;background:#f9995a"></div>
<svg class="abs" style="left:66px;top:346px" width="16" height="11" viewBox="0 0 16 11"><path d="M0.2 5.5 Q8 -4.6 15.8 5.5 Q8 15.6 0.2 5.5Z" fill="#979797"/><circle cx="8" cy="5.5" r="3.2" fill="#efefef"/><circle cx="8" cy="5.5" r="2.1" fill="#979797"/></svg>
<svg class="abs" style="left:91px;top:344px" width="17" height="17" viewBox="0 0 17 17"><path d="M1.5 5 L4.8 1.5 H15.5 V12.2 L12.2 15.5 H1.5Z" fill="#f4f4f4" stroke="#333" stroke-width="1.2" stroke-linejoin="round"/><rect x="3" y="5.5" width="8.5" height="8.8" fill="#dcdcdc"/><path d="M12.2 5 L15 2.2 V12 L12.2 14.8Z" fill="#d2d2d2"/></svg>
<div class="abs" style="left:121px;top:342px;font-size:11px;line-height:20px;color:#333">back:1</div>
<svg class="abs" style="left:39px;top:369px" width="11" height="14" viewBox="0 0 11 14"><path d="M1.5 1.2 L9.5 7 L1.5 12.8Z" fill="#f4f4f4" stroke="#2f2f2f" stroke-width="1.4" stroke-linejoin="round"/></svg>
<div class="row" style="left:58px;top:366px;width:95px"></div>
<div class="abs" style="left:58px;top:366px;width:5px;height:20px;background:#4a8fdc"></div>
<svg class="abs" style="left:66px;top:370px" width="16" height="11" viewBox="0 0 16 11"><path d="M0.2 5.5 Q8 -4.6 15.8 5.5 Q8 15.6 0.2 5.5Z" fill="#979797"/><circle cx="8" cy="5.5" r="3.2" fill="#efefef"/><circle cx="8" cy="5.5" r="2.1" fill="#979797"/></svg>
<svg class="abs" style="left:91px;top:368px" width="17" height="17" viewBox="0 0 17 17"><path d="M1.5 5 L4.8 1.5 H15.5 V12.2 L12.2 15.5 H1.5Z" fill="#f4f4f4" stroke="#333" stroke-width="1.2" stroke-linejoin="round"/><rect x="3" y="5.5" width="8.5" height="8.8" fill="#dcdcdc"/><path d="M12.2 5 L15 2.2 V12 L12.2 14.8Z" fill="#d2d2d2"/></svg>
<div class="abs" style="left:121px;top:366px;font-size:11px;line-height:20px;color:#333">top:1</div>
<svg class="abs" style="left:39px;top:393px" width="11" height="14" viewBox="0 0 11 14"><path d="M1.5 1.2 L9.5 7 L1.5 12.8Z" fill="#f4f4f4" stroke="#2f2f2f" stroke-width="1.4" stroke-linejoin="round"/></svg>
<div class="row" style="left:58px;top:390px;width:115px"></div>
<div class="abs" style="left:58px;top:390px;width:5px;height:20px;background:#f2616e"></div>
<svg class="abs" style="left:66px;top:394px" width="16" height="11" viewBox="0 0 16 11"><path d="M0.2 5.5 Q8 -4.6 15.8 5.5 Q8 15.6 0.2 5.5Z" fill="#979797"/><circle cx="8" cy="5.5" r="3.2" fill="#efefef"/><circle cx="8" cy="5.5" r="2.1" fill="#979797"/></svg>
<svg class="abs" style="left:91px;top:392px" width="17" height="17" viewBox="0 0 17 17"><path d="M1.5 5 L4.8 1.5 H15.5 V12.2 L12.2 15.5 H1.5Z" fill="#f4f4f4" stroke="#333" stroke-width="1.2" stroke-linejoin="round"/><rect x="3" y="5.5" width="8.5" height="8.8" fill="#dcdcdc"/><path d="M12.2 5 L15 2.2 V12 L12.2 14.8Z" fill="#d2d2d2"/></svg>
<div class="abs" style="left:121px;top:390px;font-size:11px;line-height:20px;color:#333">bottom:1</div>
<svg class="abs" style="left:39px;top:417px" width="11" height="14" viewBox="0 0 11 14"><path d="M1.5 1.2 L9.5 7 L1.5 12.8Z" fill="#f4f4f4" stroke="#2f2f2f" stroke-width="1.4" stroke-linejoin="round"/></svg>
<div class="row" style="left:58px;top:414px;width:127px"></div>
<div class="abs" style="left:58px;top:414px;width:5px;height:20px;background:#b98ae9"></div>
<svg class="abs" style="left:66px;top:418px" width="16" height="11" viewBox="0 0 16 11"><path d="M0.2 5.5 Q8 -4.6 15.8 5.5 Q8 15.6 0.2 5.5Z" fill="#979797"/><circle cx="8" cy="5.5" r="3.2" fill="#efefef"/><circle cx="8" cy="5.5" r="2.1" fill="#979797"/></svg>
<svg class="abs" style="left:91px;top:416px" width="17" height="17" viewBox="0 0 17 17"><path d="M1.5 5 L4.8 1.5 H15.5 V12.2 L12.2 15.5 H1.5Z" fill="#f4f4f4" stroke="#333" stroke-width="1.2" stroke-linejoin="round"/><rect x="3" y="5.5" width="8.5" height="8.8" fill="#dcdcdc"/><path d="M12.2 5 L15 2.2 V12 L12.2 14.8Z" fill="#d2d2d2"/></svg>
<div class="abs" style="left:121px;top:414px;font-size:11px;line-height:20px;color:#333">connector:1</div>
<div class="panel" style="left:4px;top:928px;width:300px;height:25px"></div>
<div class="abs" style="left:29px;top:933px;font-size:11px;color:#586470;line-height:14px">COMMENTS</div>
<svg class="abs" style="left:281px;top:934px" width="12" height="12" viewBox="0 0 12 12"><circle cx="6" cy="6" r="5.2" fill="#222"/><path d="M6 3 V9 M3 6 H9" stroke="#fff" stroke-width="1.5"/></svg>
<div class="abs" style="left:299px;top:934px;width:1px;height:13px;background:#666"></div><div class="abs" style="left:301px;top:934px;width:1px;height:13px;background:#aaa"></div>
<svg class="abs" style="left:0;top:0;pointer-events:none" width="1200" height="1008" viewBox="0 0 1200 1008"><rect x="481" y="929" width="237" height="24" fill="#efefef"/><path d="M492 933 L495 937 H493.5 V949 H490.5 V937 H489Z" fill="#fff" stroke="#333" stroke-width="1"/><path d="M485 941.5 Q488 938 494 938.5 Q500 939.5 499 942 Q497 944.5 491 944.5" fill="none" stroke="#333" stroke-width="1.2"/><path d="M487 945 L491 942.5 V947Z" fill="#222"/><path d="M505 939.5 H511 L508 943.0Z" fill="#333"/><path d="M517.5 938 L521 935 L523 937 L526 933.5 L529 936 V938 H533 V948.5 H517.5Z" fill="#e8e8e8" stroke="#333" stroke-width="1"/><path d="M517.5 938 H533" stroke="#333" stroke-width="1"/><rect x="520.5" y="940.5" width="9.5" height="5" fill="#b0b0b0" stroke="#333" stroke-width="0.9"/><path d="M546 949 Q542 944 543.5 941.5 Q545 940.5 547 942.5 V936.5 Q547 935 548.5 935 Q550 935 550 936.5 V935 Q550 933.5 551.5 933.5 Q553 933.5 553 935 V936 Q553 934.8 554.5 934.8 Q556 934.8 556 936.2 V938 Q556 937 557.2 937 Q558.5 937 558.5 938.5 V944 Q558 948 555.5 949Z" fill="#f6f6f6" stroke="#333" stroke-width="1"/><circle cx="575" cy="940.5" r="5" fill="#f2f2f2" stroke="#333" stroke-width="1.2"/><path d="M578.5 944 L582.5 948" stroke="#333" stroke-width="2.2"/><path d="M582.5 935.5 H586 M584.2 933.8 V937 M582.5 939 H586" stroke="#333" stroke-width="0.9"/><circle cx="602" cy="940" r="6.3" fill="#f4f4f4" stroke="#333" stroke-width="1.2"/><rect x="598.8" y="937" width="6.5" height="6" fill="#e8e8e8" stroke="#555" stroke-width="0.9"/><path d="M606.5 944.5 L610.5 948.5" stroke="#333" stroke-width="2"/><path d="M615 939.5 H621 L618 943.0Z" fill="#333"/><rect x="628.5" y="933.5" width="15.5" height="11.5" rx="1" fill="#ddd" stroke="#333" stroke-width="1"/><rect x="630.5" y="935.5" width="11.5" height="7.5" fill="#a6b6ec" stroke="#446" stroke-width="0.5"/><path d="M633 949 Q634 946 636.2 946 Q638.4 946 639.4 949Z" fill="#fff" stroke="#333" stroke-width="0.9"/><path d="M646 939.5 H652 L649 943.0Z" fill="#333"/><defs><linearGradient id="gg" x1="0" y1="0" x2="0" y2="1"><stop offset="0" stop-color="#a0a0a0"/><stop offset="1" stop-color="#5c5c5c"/></linearGradient></defs><rect x="659.5" y="933.5" width="15.5" height="15.5" rx="1" fill="url(#gg)" stroke="#444" stroke-width="1"/><path d="M662.1 934V949M664.7 934V949M667.3 934V949M669.9 934V949M672.5 934V949M660 936.1H675M660 938.7H675M660 941.3H675M660 943.9H675M660 946.5H675" stroke="#f6f6f6" stroke-width="0.7"/><path d="M677 939.5 H683 L680 943.0Z" fill="#333"/><rect x="690.5" y="933.5" width="15.5" height="14" rx="1" fill="#3c5a80"/><rect x="691.5" y="934.5" width="6.3" height="5.3" fill="#9fd0f6"/><rect x="698.7" y="934.5" width="6.3" height="5.3" fill="#9fd0f6"/><rect x="691.5" y="941.2" width="6.3" height="5.3" fill="#9fd0f6"/><rect x="698.7" y="941.2" width="6.3" height="5.3" fill="#9fd0f6"/><path d="M709 939.5 H715 L712 943.0Z" fill="#333"/></svg>
<svg class="abs" style="left:0;top:0" width="1200" height="1008" viewBox="0 0 1200 1008"><defs><linearGradient id="vcf" x1="0" y1="0" x2="0" y2="1"><stop offset="0" stop-color="#efefef"/><stop offset="1" stop-color="#e2e2e2"/></linearGradient></defs><polygon points="1131.8,139 1105.8,161.7 1101.7,202.1 1131.4,176" fill="url(#vcf)" fill-opacity="0.92" stroke="#9a9a9a" stroke-width="0.9"/><polygon points="1131.8,139 1167.7,159.3 1171.3,196.8 1131.4,176" fill="url(#vcf)" fill-opacity="0.92" stroke="#9a9a9a" stroke-width="0.9"/><polygon points="1101.7,202.1 1142,215.2 1171.3,196.8 1131.4,176" fill="#dcdcdc" fill-opacity="0.95" stroke="#9a9a9a" stroke-width="0.9"/><path d="M1131.8 139 V176 M1131.4 176 L1171.3 196.8" stroke="#777" stroke-width="0.8" stroke-dasharray="2.2 1.3"/><path d="M1103.5 182 L1131.6 157.5 M1131.6 157.5 L1169.5 178" stroke="#d0d0d0" stroke-width="0.7"/><text font-family="Liberation Sans" font-size="8" fill="#7a7a7a" transform="matrix(0.709,-0.705,-0.08,1,1108.5,182)" textLength="26" lengthAdjust="spacingAndGlyphs">FRONT</text><text font-family="Liberation Sans" font-size="8" fill="#7a7a7a" transform="matrix(0.81,0.584,0.06,1,1138,165)" textLength="28" lengthAdjust="spacingAndGlyphs">RIGHT</text><text font-family="Liberation Sans" font-size="8" fill="#7a7a7a" transform="matrix(-0.849,0.53,-0.6,-0.8,1151,183)" textLength="35" lengthAdjust="spacingAndGlyphs">BOTTOM</text><path d="M1101.7 202.1 L1105.5 161" stroke="#8080f0" stroke-width="1.3"/><path d="M1101.7 202.1 L1137 173.5" stroke="#f06a6a" stroke-width="1.4"/><path d="M1101.7 202.1 L1146 219" stroke="#62e062" stroke-width="1.6"/><text x="1103" y="160.5" font-family="Liberation Sans" font-size="10" fill="#8a8af2">Z</text><text x="1137" y="173" font-family="Liberation Sans" font-size="10" fill="#f06a6a">X</text><text x="1147" y="225" font-family="Liberation Sans" font-size="10" fill="#86e086">Y</text></svg>
<svg class="abs" style="left:0;top:0" width="1200" height="1008" viewBox="0 0 1200 1008"><rect x="0" y="957" width="1200" height="49" fill="#f2f2f2"/><rect x="0" y="957" width="1200" height="1" fill="#c9c9c9"/><rect x="0" y="1005" width="1200" height="1" fill="#fafafa"/><rect x="0" y="1006" width="1200" height="2" fill="#2b2d33"/><g fill="#45474c"><rect x="10.8" y="975" width="2.4" height="14"/><path d="M13.5 981.8 L23 975.5 V988.3Z"/><path d="M35.5 981.8 L45 975.5 V988.3Z"/><rect x="46.2" y="978.5" width="2" height="6.8"/><path d="M61 974.2 L72.8 981.8 L61 989.8Z"/><rect x="85" y="978.5" width="2" height="6.8"/><path d="M97.8 981.8 L88.3 975.5 V988.3Z"/><path d="M121 981.8 L111 975.5 V988.3Z"/><rect x="121" y="975" width="2.4" height="14"/></g><rect x="144" y="965" width="20" height="6" fill="#e08ce4"/><rect x="168" y="965" width="44" height="6" fill="#f9a9a9"/><rect x="216" y="965" width="20" height="6" fill="#e08ce4"/><rect x="240" y="965" width="44" height="6" fill="#f7cf82"/><rect x="288" y="965" width="20" height="6" fill="#e08ce4"/><rect x="312" y="965" width="44" height="6" fill="#62d4df"/><rect x="360" y="965" width="20" height="6" fill="#e08ce4"/><rect x="384" y="965" width="44" height="6" fill="#c3ea80"/><rect x="432" y="965" width="20" height="6" fill="#e08ce4"/><rect x="456" y="965" width="44" height="6" fill="#f99c5e"/><rect x="504" y="965" width="20" height="6" fill="#e08ce4"/><rect x="528" y="965" width="44" height="6" fill="#5b94d8"/><rect x="576" y="965" width="20" height="6" fill="#e08ce4"/><rect x="600" y="965" width="44" height="6" fill="#f2616e"/><rect x="648" y="965" width="20" height="6" fill="#e08ce4"/><rect x="672" y="965" width="212" height="6" fill="#bd8ae9"/><rect x="888" y="965" width="20" height="6" fill="#5b94d8"/><rect x="912" y="965" width="10" height="6" fill="#5b94d8"/><rect x="922" y="965" width="10" height="6" fill="#f2616e"/><rect x="936" y="965" width="44" height="6" fill="#62d4df"/><rect x="984" y="965" width="44" height="6" fill="#f99c5e"/><path d="M146.2 979 L149.8 975.4 H154 M159.7 980.5 V984.6 L156.1 988.6 H146.2Z" fill="#dcdcdc" stroke="#4a4a4a" stroke-width="1.1" stroke-linejoin="round"/><path d="M146.2 979 L149.8 975.4 H154 L159.7 980.5 V984.6 L156.1 988.6 H146.2Z" fill="#dcdcdc"/><path d="M156.1 988.6 V980 L159.7 980.5 V984.6Z" fill="#c8c8c8"/><path d="M146.2 988.6 V979 L149.8 975.4 H153.5 M159.7 981 V984.6 L156.1 988.6 H146.2" fill="none" stroke="#4a4a4a" stroke-width="1.1" stroke-linejoin="round"/><polygon points="157.50,973.70 158.11,976.02 160.19,974.81 158.98,976.89 161.30,977.50 158.98,978.11 160.19,980.19 158.11,978.98 157.50,981.30 156.89,978.98 154.81,980.19 156.02,978.11 153.70,977.50 156.02,976.89 154.81,974.81 156.89,976.02" fill="#f5a511"/><path d="M173.3 974.9 H182 M171.5 976 V985.5 M173 987.9 H178 M183.7 976 V979.5" stroke="#4a4a4a" stroke-width="1.1"/><rect x="170.1" y="973.1" width="2" height="2" fill="#1e8ee0"/><rect x="183" y="973.1" width="2" height="2" fill="#1e8ee0"/><rect x="170.1" y="986.1" width="2" height="2" fill="#1e8ee0"/><path d="M178.5 988.8 L179.2 986 L184.8 980.5 L187 982.7 L181.4 988.2Z" fill="#f5a83a"/><path d="M184.8 980.5 L185.8 979.6 Q187.8 980 188 981.8 L187 982.7Z" fill="#e8404a"/><path d="M178.5 988.8 L179.2 986.6 L180.8 988.2Z" fill="#555"/><path d="M193.9 976 L196.9 973 H205.9 V983 L202.9 986 H193.9Z" fill="#6aaee6"/><path d="M193.9 976 L196.9 973 H205.9 L202.9 976Z" fill="#8fc8f4"/><path d="M202.9 976 L205.9 973 V983 L202.9 986Z" fill="#4a8ccc"/><path d="M193.9 986 H202.9 L205.9 983 V985.8 L203 988.8 H193.9Z" fill="#c6c6c6"/><path d="M208.3 976 V986" stroke="#222" stroke-width="1.2"/><path d="M206.5 977 L208.3 973.6 L210.1 977Z" fill="#222"/><path d="M218.2 979 L221.8 975.4 H226 M231.7 980.5 V984.6 L228.1 988.6 H218.2Z" fill="#dcdcdc" stroke="#4a4a4a" stroke-width="1.1" stroke-linejoin="round"/><path d="M218.2 979 L221.8 975.4 H226 L231.7 980.5 V984.6 L228.1 988.6 H218.2Z" fill="#dcdcdc"/><path d="M228.1 988.6 V980 L231.7 980.5 V984.6Z" fill="#c8c8c8"/><path d="M218.2 988.6 V979 L221.8 975.4 H225.5 M231.7 981 V984.6 L228.1 988.6 H218.2" fill="none" stroke="#4a4a4a" stroke-width="1.1" stroke-linejoin="round"/><polygon points="229.50,973.70 230.11,976.02 232.19,974.81 230.98,976.89 233.30,977.50 230.98,978.11 232.19,980.19 230.11,978.98 229.50,981.30 228.89,978.98 226.81,980.19 228.02,978.11 225.70,977.50 228.02,976.89 226.81,974.81 228.89,976.02" fill="#f5a511"/><path d="M245.3 974.9 H254 M243.5 976 V985.5 M245 987.9 H250 M255.7 976 V979.5" stroke="#4a4a4a" stroke-width="1.1"/><rect x="242.1" y="973.1" width="2" height="2" fill="#1e8ee0"/><rect x="255" y="973.1" width="2" height="2" fill="#1e8ee0"/><rect x="242.1" y="986.1" width="2" height="2" fill="#1e8ee0"/><path d="M250.5 988.8 L251.2 986 L256.8 980.5 L259 982.7 L253.4 988.2Z" fill="#f5a83a"/><path d="M256.8 980.5 L257.8 979.6 Q259.8 980 260 981.8 L259 982.7Z" fill="#e8404a"/><path d="M250.5 988.8 L251.2 986.6 L252.8 988.2Z" fill="#555"/><path d="M265.9 976 L268.9 973 H277.9 V983 L274.9 986 H265.9Z" fill="#6aaee6"/><path d="M265.9 976 L268.9 973 H277.9 L274.9 976Z" fill="#8fc8f4"/><path d="M274.9 976 L277.9 973 V983 L274.9 986Z" fill="#4a8ccc"/><path d="M265.9 986 H274.9 L277.9 983 V985.8 L275 988.8 H265.9Z" fill="#c6c6c6"/><path d="M280.3 976 V986" stroke="#222" stroke-width="1.2"/><path d="M278.5 977 L280.3 973.6 L282.1 977Z" fill="#222"/><path d="M290.2 979 L293.8 975.4 H298 M303.7 980.5 V984.6 L300.1 988.6 H290.2Z" fill="#dcdcdc" stroke="#4a4a4a" stroke-width="1.1" stroke-linejoin="round"/><path d="M290.2 979 L293.8 975.4 H298 L303.7 980.5 V984.6 L300.1 988.6 H290.2Z" fill="#dcdcdc"/><path d="M300.1 988.6 V980 L303.7 980.5 V984.6Z" fill="#c8c8c8"/><path d="M290.2 988.6 V979 L293.8 975.4 H297.5 M303.7 981 V984.6 L300.1 988.6 H290.2" fill="none" stroke="#4a4a4a" stroke-width="1.1" stroke-linejoin="round"/><polygon points="301.50,973.70 302.11,976.02 304.19,974.81 302.98,976.89 305.30,977.50 302.98,978.11 304.19,980.19 302.11,978.98 301.50,981.30 300.89,978.98 298.81,980.19 300.02,978.11 297.70,977.50 300.02,976.89 298.81,974.81 300.89,976.02" fill="#f5a511"/><path d="M317.3 974.9 H326 M315.5 976 V985.5 M317 987.9 H322 M327.7 976 V979.5" stroke="#4a4a4a" stroke-width="1.1"/><rect x="314.1" y="973.1" width="2" height="2" fill="#1e8ee0"/><rect x="327" y="973.1" width="2" height="2" fill="#1e8ee0"/><rect x="314.1" y="986.1" width="2" height="2" fill="#1e8ee0"/><path d="M322.5 988.8 L323.2 986 L328.8 980.5 L331 982.7 L325.4 988.2Z" fill="#f5a83a"/><path d="M328.8 980.5 L329.8 979.6 Q331.8 980 332 981.8 L331 982.7Z" fill="#e8404a"/><path d="M322.5 988.8 L323.2 986.6 L324.8 988.2Z" fill="#555"/><path d="M337.9 976 L340.9 973 H349.9 V983 L346.9 986 H337.9Z" fill="#6aaee6"/><path d="M337.9 976 L340.9 973 H349.9 L346.9 976Z" fill="#8fc8f4"/><path d="M346.9 976 L349.9 973 V983 L346.9 986Z" fill="#4a8ccc"/><path d="M337.9 986 H346.9 L349.9 983 V985.8 L347 988.8 H337.9Z" fill="#c6c6c6"/><path d="M352.3 976 V986" stroke="#222" stroke-width="1.2"/><path d="M350.5 977 L352.3 973.6 L354.1 977Z" fill="#222"/><path d="M362.2 979 L365.8 975.4 H370 M375.7 980.5 V984.6 L372.1 988.6 H362.2Z" fill="#dcdcdc" stroke="#4a4a4a" stroke-width="1.1" stroke-linejoin="round"/><path d="M362.2 979 L365.8 975.4 H370 L375.7 980.5 V984.6 L372.1 988.6 H362.2Z" fill="#dcdcdc"/><path d="M372.1 988.6 V980 L375.7 980.5 V984.6Z" fill="#c8c8c8"/><path d="M362.2 988.6 V979 L365.8 975.4 H369.5 M375.7 981 V984.6 L372.1 988.6 H362.2" fill="none" stroke="#4a4a4a" stroke-width="1.1" stroke-linejoin="round"/><polygon points="373.50,973.70 374.11,976.02 376.19,974.81 374.98,976.89 377.30,977.50 374.98,978.11 376.19,980.19 374.11,978.98 373.50,981.30 372.89,978.98 370.81,980.19 372.02,978.11 369.70,977.50 372.02,976.89 370.81,974.81 372.89,976.02" fill="#f5a511"/><path d="M389.3 974.9 H398 M387.5 976 V985.5 M389 987.9 H394 M399.7 976 V979.5" stroke="#4a4a4a" stroke-width="1.1"/><rect x="386.1" y="973.1" width="2" height="2" fill="#1e8ee0"/><rect x="399" y="973.1" width="2" height="2" fill="#1e8ee0"/><rect x="386.1" y="986.1" width="2" height="2" fill="#1e8ee0"/><path d="M394.5 988.8 L395.2 986 L400.8 980.5 L403 982.7 L397.4 988.2Z" fill="#f5a83a"/><path d="M400.8 980.5 L401.8 979.6 Q403.8 980 404 981.8 L403 982.7Z" fill="#e8404a"/><path d="M394.5 988.8 L395.2 986.6 L396.8 988.2Z" fill="#555"/><path d="M409.9 976 L412.9 973 H421.9 V983 L418.9 986 H409.9Z" fill="#6aaee6"/><path d="M409.9 976 L412.9 973 H421.9 L418.9 976Z" fill="#8fc8f4"/><path d="M418.9 976 L421.9 973 V983 L418.9 986Z" fill="#4a8ccc"/><path d="M409.9 986 H418.9 L421.9 983 V985.8 L419 988.8 H409.9Z" fill="#c6c6c6"/><path d="M424.3 976 V986" stroke="#222" stroke-width="1.2"/><path d="M422.5 977 L424.3 973.6 L426.1 977Z" fill="#222"/><path d="M434.2 979 L437.8 975.4 H442 M447.7 980.5 V984.6 L444.1 988.6 H434.2Z" fill="#dcdcdc" stroke="#4a4a4a" stroke-width="1.1" stroke-linejoin="round"/><path d="M434.2 979 L437.8 975.4 H442 L447.7 980.5 V984.6 L444.1 988.6 H434.2Z" fill="#dcdcdc"/><path d="M444.1 988.6 V980 L447.7 980.5 V984.6Z" fill="#c8c8c8"/><path d="M434.2 988.6 V979 L437.8 975.4 H441.5 M447.7 981 V984.6 L444.1 988.6 H434.2" fill="none" stroke="#4a4a4a" stroke-width="1.1" stroke-linejoin="round"/><polygon points="445.50,973.70 446.11,976.02 448.19,974.81 446.98,976.89 449.30,977.50 446.98,978.11 448.19,980.19 446.11,978.98 445.50,981.30 444.89,978.98 442.81,980.19 444.02,978.11 441.70,977.50 444.02,976.89 442.81,974.81 444.89,976.02" fill="#f5a511"/><path d="M461.3 974.9 H470 M459.5 976 V985.5 M461 987.9 H466 M471.7 976 V979.5" stroke="#4a4a4a" stroke-width="1.1"/><rect x="458.1" y="973.1" width="2" height="2" fill="#1e8ee0"/><rect x="471" y="973.1" width="2" height="2" fill="#1e8ee0"/><rect x="458.1" y="986.1" width="2" height="2" fill="#1e8ee0"/><path d="M466.5 988.8 L467.2 986 L472.8 980.5 L475 982.7 L469.4 988.2Z" fill="#f5a83a"/><path d="M472.8 980.5 L473.8 979.6 Q475.8 980 476 981.8 L475 982.7Z" fill="#e8404a"/><path d="M466.5 988.8 L467.2 986.6 L468.8 988.2Z" fill="#555"/><path d="M481.9 976 L484.9 973 H493.9 V983 L490.9 986 H481.9Z" fill="#6aaee6"/><path d="M481.9 976 L484.9 973 H493.9 L490.9 976Z" fill="#8fc8f4"/><path d="M490.9 976 L493.9 973 V983 L490.9 986Z" fill="#4a8ccc"/><path d="M481.9 986 H490.9 L493.9 983 V985.8 L491 988.8 H481.9Z" fill="#c6c6c6"/><path d="M496.3 976 V986" stroke="#222" stroke-width="1.2"/><path d="M494.5 977 L496.3 973.6 L498.1 977Z" fill="#222"/><path d="M506.2 979 L509.8 975.4 H514 M519.7 980.5 V984.6 L516.1 988.6 H506.2Z" fill="#dcdcdc" stroke="#4a4a4a" stroke-width="1.1" stroke-linejoin="round"/><path d="M506.2 979 L509.8 975.4 H514 L519.7 980.5 V984.6 L516.1 988.6 H506.2Z" fill="#dcdcdc"/><path d="M516.1 988.6 V980 L519.7 980.5 V984.6Z" fill="#c8c8c8"/><path d="M506.2 988.6 V979 L509.8 975.4 H513.5 M519.7 981 V984.6 L516.1 988.6 H506.2" fill="none" stroke="#4a4a4a" stroke-width="1.1" stroke-linejoin="round"/><polygon points="517.50,973.70 518.11,976.02 520.19,974.81 518.98,976.89 521.30,977.50 518.98,978.11 520.19,980.19 518.11,978.98 517.50,981.30 516.89,978.98 514.81,980.19 516.02,978.11 513.70,977.50 516.02,976.89 514.81,974.81 516.89,976.02" fill="#f5a511"/><path d="M533.3 974.9 H542 M531.5 976 V985.5 M533 987.9 H538 M543.7 976 V979.5" stroke="#4a4a4a" stroke-width="1.1"/><rect x="530.1" y="973.1" width="2" height="2" fill="#1e8ee0"/><rect x="543" y="973.1" width="2" height="2" fill="#1e8ee0"/><rect x="530.1" y="986.1" width="2" height="2" fill="#1e8ee0"/><path d="M538.5 988.8 L539.2 986 L544.8 980.5 L547 982.7 L541.4 988.2Z" fill="#f5a83a"/><path d="M544.8 980.5 L545.8 979.6 Q547.8 980 548 981.8 L547 982.7Z" fill="#e8404a"/><path d="M538.5 988.8 L539.2 986.6 L540.8 988.2Z" fill="#555"/><path d="M553.9 976 L556.9 973 H565.9 V983 L562.9 986 H553.9Z" fill="#6aaee6"/><path d="M553.9 976 L556.9 973 H565.9 L562.9 976Z" fill="#8fc8f4"/><path d="M562.9 976 L565.9 973 V983 L562.9 986Z" fill="#4a8ccc"/><path d="M553.9 986 H562.9 L565.9 983 V985.8 L563 988.8 H553.9Z" fill="#c6c6c6"/><path d="M568.3 976 V986" stroke="#222" stroke-width="1.2"/><path d="M566.5 977 L568.3 973.6 L570.1 977Z" fill="#222"/><path d="M578.2 979 L581.8 975.4 H586 M591.7 980.5 V984.6 L588.1 988.6 H578.2Z" fill="#dcdcdc" stroke="#4a4a4a" stroke-width="1.1" stroke-linejoin="round"/><path d="M578.2 979 L581.8 975.4 H586 L591.7 980.5 V984.6 L588.1 988.6 H578.2Z" fill="#dcdcdc"/><path d="M588.1 988.6 V980 L591.7 980.5 V984.6Z" fill="#c8c8c8"/><path d="M578.2 988.6 V979 L581.8 975.4 H585.5 M591.7 981 V984.6 L588.1 988.6 H578.2" fill="none" stroke="#4a4a4a" stroke-width="1.1" stroke-linejoin="round"/><polygon points="589.50,973.70 590.11,976.02 592.19,974.81 590.98,976.89 593.30,977.50 590.98,978.11 592.19,980.19 590.11,978.98 589.50,981.30 588.89,978.98 586.81,980.19 588.02,978.11 585.70,977.50 588.02,976.89 586.81,974.81 588.89,976.02" fill="#f5a511"/><path d="M605.3 974.9 H614 M603.5 976 V985.5 M605 987.9 H610 M615.7 976 V979.5" stroke="#4a4a4a" stroke-width="1.1"/><rect x="602.1" y="973.1" width="2" height="2" fill="#1e8ee0"/><rect x="615" y="973.1" width="2" height="2" fill="#1e8ee0"/><rect x="602.1" y="986.1" width="2" height="2" fill="#1e8ee0"/><path d="M610.5 988.8 L611.2 986 L616.8 980.5 L619 982.7 L613.4 988.2Z" fill="#f5a83a"/><path d="M616.8 980.5 L617.8 979.6 Q619.8 980 620 981.8 L619 982.7Z" fill="#e8404a"/><path d="M610.5 988.8 L611.2 986.6 L612.8 988.2Z" fill="#555"/><path d="M625.9 976 L628.9 973 H637.9 V983 L634.9 986 H625.9Z" fill="#6aaee6"/><path d="M625.9 976 L628.9 973 H637.9 L634.9 976Z" fill="#8fc8f4"/><path d="M634.9 976 L637.9 973 V983 L634.9 986Z" fill="#4a8ccc"/><path d="M625.9 986 H634.9 L637.9 983 V985.8 L635 988.8 H625.9Z" fill="#c6c6c6"/><path d="M640.3 976 V986" stroke="#222" stroke-width="1.2"/><path d="M638.5 977 L640.3 973.6 L642.1 977Z" fill="#222"/><path d="M650.2 979 L653.8 975.4 H658 M663.7 980.5 V984.6 L660.1 988.6 H650.2Z" fill="#dcdcdc" stroke="#4a4a4a" stroke-width="1.1" stroke-linejoin="round"/><path d="M650.2 979 L653.8 975.4 H658 L663.7 980.5 V984.6 L660.1 988.6 H650.2Z" fill="#dcdcdc"/><path d="M660.1 988.6 V980 L663.7 980.5 V984.6Z" fill="#c8c8c8"/><path d="M650.2 988.6 V979 L653.8 975.4 H657.5 M663.7 981 V984.6 L660.1 988.6 H650.2" fill="none" stroke="#4a4a4a" stroke-width="1.1" stroke-linejoin="round"/><polygon points="661.50,973.70 662.11,976.02 664.19,974.81 662.98,976.89 665.30,977.50 662.98,978.11 664.19,980.19 662.11,978.98 661.50,981.30 660.89,978.98 658.81,980.19 660.02,978.11 657.70,977.50 660.02,976.89 658.81,974.81 660.89,976.02" fill="#f5a511"/><path d="M677.3 974.9 H686 M675.5 976 V985.5 M677 987.9 H682 M687.7 976 V979.5" stroke="#4a4a4a" stroke-width="1.1"/><rect x="674.1" y="973.1" width="2" height="2" fill="#1e8ee0"/><rect x="687" y="973.1" width="2" height="2" fill="#1e8ee0"/><rect x="674.1" y="986.1" width="2" height="2" fill="#1e8ee0"/><path d="M682.5 988.8 L683.2 986 L688.8 980.5 L691 982.7 L685.4 988.2Z" fill="#f5a83a"/><path d="M688.8 980.5 L689.8 979.6 Q691.8 980 692 981.8 L691 982.7Z" fill="#e8404a"/><path d="M682.5 988.8 L683.2 986.6 L684.8 988.2Z" fill="#555"/><path d="M697.9 976 L700.9 973 H709.9 V983 L706.9 986 H697.9Z" fill="#6aaee6"/><path d="M697.9 976 L700.9 973 H709.9 L706.9 976Z" fill="#8fc8f4"/><path d="M706.9 976 L709.9 973 V983 L706.9 986Z" fill="#4a8ccc"/><path d="M697.9 986 H706.9 L709.9 983 V985.8 L707 988.8 H697.9Z" fill="#c6c6c6"/><path d="M712.3 976 V986" stroke="#222" stroke-width="1.2"/><path d="M710.5 977 L712.3 973.6 L714.1 977Z" fill="#222"/><path d="M722 977 L725 974 H735 V985 L732 988 H722Z" fill="#ececec" stroke="#4a4a4a" stroke-width="1.1" stroke-linejoin="round"/><path d="M732 988 V977 L735 974 V985Z" fill="#c6c6c6"/><path d="M722 977 H732 L735 974 M732 977 V988" fill="none" stroke="#4a4a4a" stroke-width="1"/><rect x="724" y="979" width="6" height="7" fill="#dcdcdc"/><path d="M724.5 979.5 H726.5 V983 H729.5 V985.5 H724.5Z" fill="#3f86c8"/><path d="M749.3 974.9 H758 M747.5 976 V985.5 M749 987.9 H754 M759.7 976 V979.5" stroke="#4a4a4a" stroke-width="1.1"/><rect x="746.1" y="973.1" width="2" height="2" fill="#1e8ee0"/><rect x="759" y="973.1" width="2" height="2" fill="#1e8ee0"/><rect x="746.1" y="986.1" width="2" height="2" fill="#1e8ee0"/><path d="M754.5 988.8 L755.2 986 L760.8 980.5 L763 982.7 L757.4 988.2Z" fill="#f5a83a"/><path d="M760.8 980.5 L761.8 979.6 Q763.8 980 764 981.8 L763 982.7Z" fill="#e8404a"/><path d="M754.5 988.8 L755.2 986.6 L756.8 988.2Z" fill="#555"/><path d="M769.9 976 L772.9 973 H781.9 V983 L778.9 986 H769.9Z" fill="#6aaee6"/><path d="M769.9 976 L772.9 973 H781.9 L778.9 976Z" fill="#8fc8f4"/><path d="M778.9 976 L781.9 973 V983 L778.9 986Z" fill="#4a8ccc"/><path d="M769.9 986 H778.9 L781.9 983 V985.8 L779 988.8 H769.9Z" fill="#c6c6c6"/><path d="M784.3 976 V986" stroke="#222" stroke-width="1.2"/><path d="M782.5 977 L784.3 973.6 L786.1 977Z" fill="#222"/><path d="M797.3 974.9 H806 M795.5 976 V985.5 M797 987.9 H802 M807.7 976 V979.5" stroke="#4a4a4a" stroke-width="1.1"/><rect x="794.1" y="973.1" width="2" height="2" fill="#1e8ee0"/><rect x="807" y="973.1" width="2" height="2" fill="#1e8ee0"/><rect x="794.1" y="986.1" width="2" height="2" fill="#1e8ee0"/><path d="M802.5 988.8 L803.2 986 L808.8 980.5 L811 982.7 L805.4 988.2Z" fill="#f5a83a"/><path d="M808.8 980.5 L809.8 979.6 Q811.8 980 812 981.8 L811 982.7Z" fill="#e8404a"/><path d="M802.5 988.8 L803.2 986.6 L804.8 988.2Z" fill="#555"/><path d="M817.9 976 L820.9 973 H829.9 V983 L826.9 986 H817.9Z" fill="#6aaee6"/><path d="M817.9 976 L820.9 973 H829.9 L826.9 976Z" fill="#8fc8f4"/><path d="M826.9 976 L829.9 973 V983 L826.9 986Z" fill="#4a8ccc"/><path d="M817.9 986 H826.9 L829.9 983 V985.8 L827 988.8 H817.9Z" fill="#c6c6c6"/><path d="M832.3 976 V986" stroke="#222" stroke-width="1.2"/><path d="M830.5 977 L832.3 973.6 L834.1 977Z" fill="#222"/><path d="M845.3 974.9 H854 M843.5 976 V985.5 M845 987.9 H850 M855.7 976 V979.5" stroke="#4a4a4a" stroke-width="1.1"/><rect x="842.1" y="973.1" width="2" height="2" fill="#1e8ee0"/><rect x="855" y="973.1" width="2" height="2" fill="#1e8ee0"/><rect x="842.1" y="986.1" width="2" height="2" fill="#1e8ee0"/><path d="M850.5 988.8 L851.2 986 L856.8 980.5 L859 982.7 L853.4 988.2Z" fill="#f5a83a"/><path d="M856.8 980.5 L857.8 979.6 Q859.8 980 860 981.8 L859 982.7Z" fill="#e8404a"/><path d="M850.5 988.8 L851.2 986.6 L852.8 988.2Z" fill="#555"/><path d="M865.9 976 L868.9 973 H877.9 V983 L874.9 986 H865.9Z" fill="#6aaee6"/><path d="M865.9 976 L868.9 973 H877.9 L874.9 976Z" fill="#8fc8f4"/><path d="M874.9 976 L877.9 973 V983 L874.9 986Z" fill="#4a8ccc"/><path d="M865.9 986 H874.9 L877.9 983 V985.8 L875 988.8 H865.9Z" fill="#c6c6c6"/><path d="M880.3 976 V986" stroke="#222" stroke-width="1.2"/><path d="M878.5 977 L880.3 973.6 L882.1 977Z" fill="#222"/><path d="M893.3 974.9 H902 M891.5 976 V985.5 M893 987.9 H898 M903.7 976 V979.5" stroke="#4a4a4a" stroke-width="1.1"/><rect x="890.1" y="973.1" width="2" height="2" fill="#1e8ee0"/><rect x="903" y="973.1" width="2" height="2" fill="#1e8ee0"/><rect x="890.1" y="986.1" width="2" height="2" fill="#1e8ee0"/><path d="M898.5 988.8 L899.2 986 L904.8 980.5 L907 982.7 L901.4 988.2Z" fill="#f5a83a"/><path d="M904.8 980.5 L905.8 979.6 Q907.8 980 908 981.8 L907 982.7Z" fill="#e8404a"/><path d="M898.5 988.8 L899.2 986.6 L900.8 988.2Z" fill="#555"/><path d="M913.9 976 L916.9 973 H925.9 V983 L922.9 986 H913.9Z" fill="#6aaee6"/><path d="M913.9 976 L916.9 973 H925.9 L922.9 976Z" fill="#8fc8f4"/><path d="M922.9 976 L925.9 973 V983 L922.9 986Z" fill="#4a8ccc"/><path d="M913.9 986 H922.9 L925.9 983 V985.8 L923 988.8 H913.9Z" fill="#c6c6c6"/><path d="M928.3 976 V986" stroke="#222" stroke-width="1.2"/><path d="M926.5 977 L928.3 973.6 L930.1 977Z" fill="#222"/><path d="M941.3 974.9 H950 M939.5 976 V985.5 M941 987.9 H946 M951.7 976 V979.5" stroke="#4a4a4a" stroke-width="1.1"/><rect x="938.1" y="973.1" width="2" height="2" fill="#1e8ee0"/><rect x="951" y="973.1" width="2" height="2" fill="#1e8ee0"/><rect x="938.1" y="986.1" width="2" height="2" fill="#1e8ee0"/><path d="M946.5 988.8 L947.2 986 L952.8 980.5 L955 982.7 L949.4 988.2Z" fill="#f5a83a"/><path d="M952.8 980.5 L953.8 979.6 Q955.8 980 956 981.8 L955 982.7Z" fill="#e8404a"/><path d="M946.5 988.8 L947.2 986.6 L948.8 988.2Z" fill="#555"/><path d="M961.9 976 L964.9 973 H973.9 V983 L970.9 986 H961.9Z" fill="#6aaee6"/><path d="M961.9 976 L964.9 973 H973.9 L970.9 976Z" fill="#8fc8f4"/><path d="M970.9 976 L973.9 973 V983 L970.9 986Z" fill="#4a8ccc"/><path d="M961.9 986 H970.9 L973.9 983 V985.8 L971 988.8 H961.9Z" fill="#c6c6c6"/><path d="M976.3 976 V986" stroke="#222" stroke-width="1.2"/><path d="M974.5 977 L976.3 973.6 L978.1 977Z" fill="#222"/><path d="M989.3 974.9 H998 M987.5 976 V985.5 M989 987.9 H994 M999.7 976 V979.5" stroke="#4a4a4a" stroke-width="1.1"/><rect x="986.1" y="973.1" width="2" height="2" fill="#1e8ee0"/><rect x="999" y="973.1" width="2" height="2" fill="#1e8ee0"/><rect x="986.1" y="986.1" width="2" height="2" fill="#1e8ee0"/><path d="M994.5 988.8 L995.2 986 L1000.8 980.5 L1003 982.7 L997.4 988.2Z" fill="#f5a83a"/><path d="M1000.8 980.5 L1001.8 979.6 Q1003.8 980 1004 981.8 L1003 982.7Z" fill="#e8404a"/><path d="M994.5 988.8 L995.2 986.6 L996.8 988.2Z" fill="#555"/><path d="M1009.9 976 L1012.9 973 H1021.9 V983 L1018.9 986 H1009.9Z" fill="#6aaee6"/><path d="M1009.9 976 L1012.9 973 H1021.9 L1018.9 976Z" fill="#8fc8f4"/><path d="M1018.9 976 L1021.9 973 V983 L1018.9 986Z" fill="#4a8ccc"/><path d="M1009.9 986 H1018.9 L1021.9 983 V985.8 L1019 988.8 H1009.9Z" fill="#c6c6c6"/><path d="M1024.3 976 V986" stroke="#222" stroke-width="1.2"/><path d="M1022.5 977 L1024.3 973.6 L1026.1 977Z" fill="#222"/><rect x="153.3" y="996.8" width="866" height="2" fill="#c9c9c9"/><path d="M154.2 992V998M178.2 992V998M202.2 992V998M226.2 992V998M250.2 992V998M274.2 992V998M298.2 992V998M322.2 992V998M346.2 992V998M370.2 992V998M394.2 992V998M418.2 992V998M442.2 992V998M466.2 992V998M490.2 992V998M514.2 992V998M538.2 992V998M562.2 992V998M586.2 992V998M610.2 992V998M634.2 992V998M658.2 992V998M682.2 992V998M706.2 992V998M730.2 992V998M754.2 992V998M778.2 992V998M802.2 992V998M826.2 992V998M850.2 992V998M874.2 992V998M898.2 992V998M922.2 992V998M946.2 992V998M970.2 992V998M994.2 992V998M1018.2 992V998" stroke="#c9c9c9" stroke-width="1.6"/><path d="M1024.5 967 H1036 V970.5 L1031.6 974.5 V999 H1029.4 V974.5 L1024.5 970.5Z" fill="#5a5a5a"/><path fill="#8e8e8e" fill-rule="evenodd" d="M1184.62,979.89 L1186.81,980.25 L1186.81,983.75 L1184.62,984.11 L1184.47,984.48 L1185.76,986.29 L1183.29,988.76 L1181.48,987.47 L1181.11,987.62 L1180.75,989.81 L1177.25,989.81 L1176.89,987.62 L1176.52,987.47 L1174.71,988.76 L1172.24,986.29 L1173.53,984.48 L1173.38,984.11 L1171.19,983.75 L1171.19,980.25 L1173.38,979.89 L1173.53,979.52 L1172.24,977.71 L1174.71,975.24 L1176.52,976.53 L1176.89,976.38 L1177.25,974.19 L1180.75,974.19 L1181.11,976.38 L1181.48,976.53 L1183.29,975.24 L1185.76,977.71 L1184.47,979.52Z M1181.9 982 A2.9 2.9 0 1 0 1176.1 982 A2.9 2.9 0 1 0 1181.9 982Z"/></svg>
</body></html>
